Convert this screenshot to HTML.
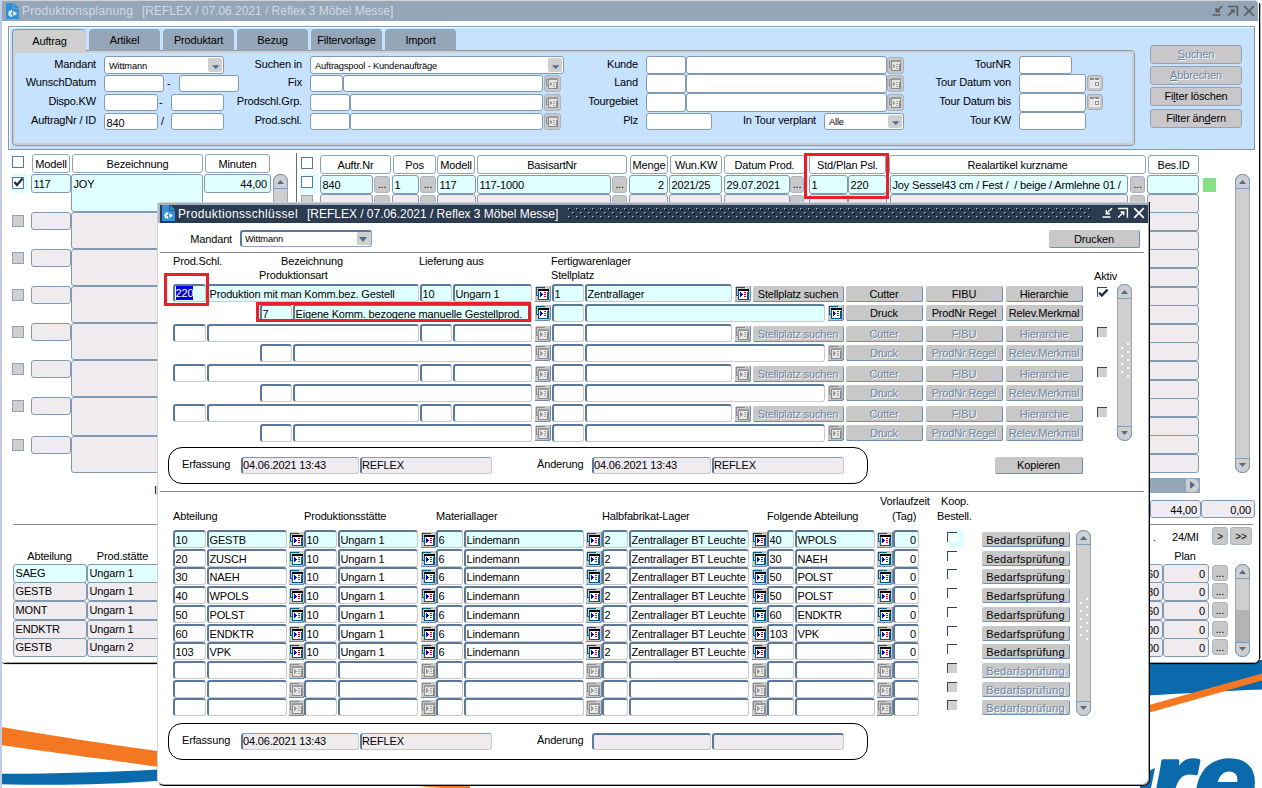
<!DOCTYPE html><html><head><meta charset="utf-8"><title>Produktionsplanung</title><style>
*{box-sizing:border-box;margin:0;padding:0}
html,body{width:1262px;height:788px;overflow:hidden;background:#fff}
body{position:relative;font-family:"Liberation Sans",sans-serif;font-size:11px;letter-spacing:-0.16px;color:#000;line-height:14px}
div,span,svg{position:absolute}
.t{white-space:nowrap;height:14px;line-height:14px}
.r{text-align:right}
.c{text-align:center}
/* main window field */
.mf{border:1px solid #8299b2;border-radius:3px;background:#fff;white-space:nowrap;overflow:hidden;padding-left:1.5px}
.mf.cy{background:#e0ffff}
.mf.dis{background:#efebef}
.mh{border:1px solid #8ea2b8;border-radius:3px;background:#fff;text-align:center;white-space:nowrap;overflow:hidden}
/* dialog field */
.df{border-style:solid;border-width:2px 1px 1px 2px;border-color:#5c7898 #c9c9c9 #c9c9c9 #5c7898;border-radius:3px;background:#fff;white-space:nowrap;overflow:hidden;padding-left:0.5px}
.df.cy{background:#e0ffff}
.df.dis{background:#efebef}
.bt{background:#c8c8c8;border-style:solid;border-width:0 1px 1px 0;border-color:#6f8db0;border-radius:2px;text-align:center;white-space:nowrap;overflow:hidden}
.bt.m{border:1px solid #97a3b2;border-radius:3px;background:#c9c7c9}
.bt.dis{color:#6c87a6;text-shadow:1px 1px 0 #fff}
.sb{background:#cfcfcf;border:1px solid #8ea6c0;border-radius:7px}
</style></head><body>
<svg style="left:0;top:660px" width="1262" height="128" viewBox="0 660 1262 128"><path d="M0 726.8 C50 735 110 745 158 751 L470 775 L470 790 L158 766.8 C110 760 50 752 0 745 Z" fill="#f47721"/><path d="M0 773.8 C60 773.5 110 772 158 769.4 L470 750 L470 775 L158 780.8 C110 784.5 60 785.5 0 784.2 Z" fill="#0b6aab"/><path d="M1140 660 L1262 660 L1262 689.6 C1225 691 1185 693.5 1140 696 Z" fill="#0b6aab"/><path d="M1140 707.6 L1262 673.6 L1262 680.4 L1140 715.2 Z" fill="#f47721"/><text x="1150" y="820" font-family="Liberation Sans" font-size="112" font-weight="bold" font-style="italic" fill="#0b6aab" stroke="#0b6aab" stroke-width="3.5" stroke-linejoin="round">r</text><text x="1194" y="820" font-family="Liberation Sans" font-size="112" font-weight="bold" font-style="italic" fill="#0b6aab" stroke="#0b6aab" stroke-width="3.5" stroke-linejoin="round">e</text><path d="M1140 775 L1155 768 L1151 788 L1140 788 Z" fill="#0b6aab"/></svg>
<div class="" style="left:0px;top:0px;width:2px;height:788px;background:#c3cce0"></div>
<div class="" style="left:2px;top:21px;width:1258px;height:643px;background:#fff;border-bottom:1px solid #000;border-right:1px solid #000;border-radius:0 0 6px 3px"></div>
<div class="" style="left:5px;top:662px;width:1250px;height:1px;background:rgba(0,0,0,.35)"></div>
<div class="" style="left:5px;top:664px;width:1250px;height:1px;background:rgba(0,0,0,.12)"></div>
<div class="" style="left:1260px;top:24px;width:1px;height:634px;background:rgba(0,0,0,.3)"></div>
<div class="" style="left:2px;top:0px;width:1254px;height:1px;background:#d4d4d4"></div>
<div class="" style="left:2px;top:1px;width:1256px;height:20px;background:#94a6b8;border-radius:0 3px 0 0"></div>
<div class="" style="left:1259px;top:3px;width:1px;height:30px;background:#000"></div>
<div class="" style="left:1260px;top:4px;width:1px;height:20px;background:rgba(0,0,0,.3)"></div>
<svg style="left:6px;top:3px" width="13.2" height="16" viewBox="0 0 13.2 16"><path d="M0 0 H7.3 V5.7 H13.2 V16 H0 Z" fill="#3192d9"/><path d="M8.1 0 L13.2 5 H8.1 Z" fill="#3192d9"/><path d="M5.9 8.1 A2.45 2.45 0 0 0 5.9 13 Z" fill="#fff"/><rect x="-0.75" y="-3.5" width="1.5" height="1.6" fill="#fff" transform="translate(5.5 10.55) rotate(0)"/><rect x="-0.75" y="-3.5" width="1.5" height="1.6" fill="#fff" transform="translate(5.5 10.55) rotate(-45)"/><rect x="-0.75" y="-3.5" width="1.5" height="1.6" fill="#fff" transform="translate(5.5 10.55) rotate(-90)"/><rect x="-0.75" y="-3.5" width="1.5" height="1.6" fill="#fff" transform="translate(5.5 10.55) rotate(-135)"/><rect x="-0.75" y="-3.5" width="1.5" height="1.6" fill="#fff" transform="translate(5.5 10.55) rotate(180)"/><circle cx="5.4" cy="10.55" r="0.8" fill="#3192d9"/><path d="M7.3 8.1 L11.1 10.55 L7.3 13 Z" fill="#fff"/></svg>
<div class="t" style="left:22px;top:4px;font-size:12px;color:#d3dae2;letter-spacing:0.29px;">Produktionsplanung</div>
<div class="t" style="left:142px;top:4px;font-size:12px;color:#d3dae2;letter-spacing:-0.02px;">[REFLEX / 07.06.2021 / Reflex 3 Möbel Messe]</div>
<svg style="left:1210px;top:3px" width="48" height="17" viewBox="0 0 48 17" fill="none" stroke="#5e5e5e" stroke-width="1.7"><path d="M2.5 12 H10.5 M12 3.2 L6.4 8.6 M6.3 5 V8.7 H10"/><path d="M18 3.5 H27.4 V12.8 M18.2 12.6 L23.6 7.1 M20.6 7 H23.7 V10.3"/><path d="M34.2 3.2 L43.8 12.8 M43.8 3.2 L34.2 12.8" stroke-width="1.7"/></svg>
<div class="" style="left:8px;top:26px;width:1247px;height:124px;background:#c6e2ff;border:1px solid #8497ab;box-shadow:inset 1px 1px 0 #fff"></div>
<div class="" style="left:12px;top:50px;width:1123px;height:96px;border:1px solid #8497ab;border-radius:4px;box-shadow:inset 0 0 0 2px #d0d0d0;"></div>
<div class="" style="left:12px;top:29px;width:74px;height:24px;background:#cfcfcf;border-left:1px solid #8497ab;border-top:1px solid #8497ab;border-radius:4px 4px 0 0;line-height:22px;text-align:center;">Auftrag</div>
<div class="" style="left:89px;top:29px;width:71px;height:22px;background:#94a6b8;border-radius:4px 4px 0 0;line-height:23px;text-align:center;">Artikel</div>
<div class="" style="left:163px;top:29px;width:71px;height:22px;background:#94a6b8;border-radius:4px 4px 0 0;line-height:23px;text-align:center;">Produktart</div>
<div class="" style="left:237px;top:29px;width:71px;height:22px;background:#94a6b8;border-radius:4px 4px 0 0;line-height:23px;text-align:center;">Bezug</div>
<div class="" style="left:311px;top:29px;width:71px;height:22px;background:#94a6b8;border-radius:4px 4px 0 0;line-height:23px;text-align:center;">Filtervorlage</div>
<div class="" style="left:385px;top:29px;width:71px;height:22px;background:#94a6b8;border-radius:4px 4px 0 0;line-height:23px;text-align:center;">Import</div>
<div class="t r" style="left:-204px;width:300px;top:57px;">Mandant</div>
<div class="t r" style="left:-204px;width:300px;top:75px;">WunschDatum</div>
<div class="t r" style="left:-204px;width:300px;top:94px;">Dispo.KW</div>
<div class="t r" style="left:-204px;width:300px;top:113px;">AuftragNr / ID</div>
<div class="mf " style="left:104px;top:56px;width:120px;height:18px;line-height:18px;padding-left:4px;font-size:9.3px;">Wittmann</div>
<div class="" style="left:208px;top:58px;width:14px;height:14px;background:#cfcfcf;border-radius:2px"></div>
<svg style="left:211.5px;top:65px" width="7.5" height="4" viewBox="0 0 8 4"><path d="M0 0 H8 L4 4 Z" fill="#4f6c92"/></svg>
<div class="mf " style="left:104px;top:75px;width:60px;height:17px;line-height:17px;"></div>
<div class="t" style="left:167px;top:76px;">-</div>
<div class="mf " style="left:179px;top:75px;width:60px;height:17px;line-height:17px;"></div>
<div class="mf " style="left:104px;top:94px;width:54px;height:17px;line-height:17px;"></div>
<div class="t" style="left:159px;top:95px;">-</div>
<div class="mf " style="left:171px;top:94px;width:53px;height:17px;line-height:17px;"></div>
<div class="mf " style="left:104px;top:113px;width:54px;height:17px;line-height:19px;">840</div>
<div class="t" style="left:161px;top:114px;">/</div>
<div class="mf " style="left:171px;top:113px;width:53px;height:17px;line-height:17px;"></div>
<div class="t r" style="left:2px;width:300px;top:57px;">Suchen in</div>
<div class="t r" style="left:2px;width:300px;top:75px;">Fix</div>
<div class="t r" style="left:2px;width:300px;top:94px;">Prodschl.Grp.</div>
<div class="t r" style="left:2px;width:300px;top:113px;">Prod.schl.</div>
<div class="mf " style="left:310px;top:56px;width:254px;height:18px;line-height:18px;padding-left:4px;font-size:9.3px;">Auftragspool - Kundenaufträge</div>
<div class="" style="left:548px;top:58px;width:14px;height:14px;background:#cfcfcf;border-radius:2px"></div>
<svg style="left:551.5px;top:65px" width="7.5" height="4" viewBox="0 0 8 4"><path d="M0 0 H8 L4 4 Z" fill="#4f6c92"/></svg>
<div class="mf " style="left:310px;top:75px;width:33px;height:17px;line-height:17px;"></div>
<div class="mf " style="left:343px;top:75px;width:200px;height:17px;line-height:17px;"></div>
<div class="" style="left:544px;top:75px;width:17px;height:17px;background:#c8c8c8;border:1px solid #a9b4c2;border-radius:3px"></div>
<svg style="left:545px;top:76px" width="15" height="15" viewBox="0 0 15 15" shape-rendering="crispEdges"><rect x="1.5" y="3.5" width="3" height="6" fill="none" stroke="#8c8c8c" stroke-width="1"/><rect x="3.5" y="3.5" width="9" height="9" fill="#e6e6e6" stroke="#8c8c8c" stroke-width="1"/><rect x="3" y="2" width="10" height="2" fill="#9a9a9a"/><rect x="12" y="2" width="1" height="4" fill="#9a9a9a"/><path d="M5 6 L7 8 L5 10 Z" fill="#9a9a9a"/><rect x="8" y="6" width="2" height="1" fill="#a8a8a8"/><rect x="8" y="8" width="2" height="1" fill="#a8a8a8"/><rect x="8" y="10" width="2" height="1" fill="#a8a8a8"/><rect x="11" y="6" width="1" height="6" fill="#8c8c8c"/></svg>
<div class="mf " style="left:310px;top:94px;width:40px;height:17px;line-height:17px;"></div>
<div class="mf " style="left:350px;top:94px;width:193px;height:17px;line-height:17px;"></div>
<div class="" style="left:544px;top:94px;width:17px;height:17px;background:#c8c8c8;border:1px solid #a9b4c2;border-radius:3px"></div>
<svg style="left:545px;top:95px" width="15" height="15" viewBox="0 0 15 15" shape-rendering="crispEdges"><rect x="1.5" y="3.5" width="3" height="6" fill="none" stroke="#8c8c8c" stroke-width="1"/><rect x="3.5" y="3.5" width="9" height="9" fill="#e6e6e6" stroke="#8c8c8c" stroke-width="1"/><rect x="3" y="2" width="10" height="2" fill="#9a9a9a"/><rect x="12" y="2" width="1" height="4" fill="#9a9a9a"/><path d="M5 6 L7 8 L5 10 Z" fill="#9a9a9a"/><rect x="8" y="6" width="2" height="1" fill="#a8a8a8"/><rect x="8" y="8" width="2" height="1" fill="#a8a8a8"/><rect x="8" y="10" width="2" height="1" fill="#a8a8a8"/><rect x="11" y="6" width="1" height="6" fill="#8c8c8c"/></svg>
<div class="mf " style="left:310px;top:113px;width:40px;height:17px;line-height:17px;"></div>
<div class="mf " style="left:350px;top:113px;width:193px;height:17px;line-height:17px;"></div>
<div class="" style="left:544px;top:113px;width:17px;height:17px;background:#c8c8c8;border:1px solid #a9b4c2;border-radius:3px"></div>
<svg style="left:545px;top:114px" width="15" height="15" viewBox="0 0 15 15" shape-rendering="crispEdges"><rect x="1.5" y="3.5" width="3" height="6" fill="none" stroke="#8c8c8c" stroke-width="1"/><rect x="3.5" y="3.5" width="9" height="9" fill="#e6e6e6" stroke="#8c8c8c" stroke-width="1"/><rect x="3" y="2" width="10" height="2" fill="#9a9a9a"/><rect x="12" y="2" width="1" height="4" fill="#9a9a9a"/><path d="M5 6 L7 8 L5 10 Z" fill="#9a9a9a"/><rect x="8" y="6" width="2" height="1" fill="#a8a8a8"/><rect x="8" y="8" width="2" height="1" fill="#a8a8a8"/><rect x="8" y="10" width="2" height="1" fill="#a8a8a8"/><rect x="11" y="6" width="1" height="6" fill="#8c8c8c"/></svg>
<div class="t r" style="left:338px;width:300px;top:57px;">Kunde</div>
<div class="t r" style="left:338px;width:300px;top:75px;">Land</div>
<div class="t r" style="left:338px;width:300px;top:94px;">Tourgebiet</div>
<div class="t r" style="left:338px;width:300px;top:113px;">Plz</div>
<div class="mf " style="left:646px;top:56px;width:40px;height:18px;line-height:18px;"></div>
<div class="mf " style="left:686px;top:56px;width:201px;height:18px;line-height:18px;"></div>
<div class="" style="left:887px;top:57px;width:17px;height:17px;background:#c8c8c8;border:1px solid #a9b4c2;border-radius:3px"></div>
<svg style="left:888px;top:58px" width="15" height="15" viewBox="0 0 15 15" shape-rendering="crispEdges"><rect x="1.5" y="3.5" width="3" height="6" fill="none" stroke="#8c8c8c" stroke-width="1"/><rect x="3.5" y="3.5" width="9" height="9" fill="#e6e6e6" stroke="#8c8c8c" stroke-width="1"/><rect x="3" y="2" width="10" height="2" fill="#9a9a9a"/><rect x="12" y="2" width="1" height="4" fill="#9a9a9a"/><path d="M5 6 L7 8 L5 10 Z" fill="#9a9a9a"/><rect x="8" y="6" width="2" height="1" fill="#a8a8a8"/><rect x="8" y="8" width="2" height="1" fill="#a8a8a8"/><rect x="8" y="10" width="2" height="1" fill="#a8a8a8"/><rect x="11" y="6" width="1" height="6" fill="#8c8c8c"/></svg>
<div class="mf " style="left:646px;top:74px;width:40px;height:19px;line-height:19px;"></div>
<div class="mf " style="left:686px;top:74px;width:201px;height:19px;line-height:19px;"></div>
<div class="" style="left:887px;top:75px;width:17px;height:17px;background:#c8c8c8;border:1px solid #a9b4c2;border-radius:3px"></div>
<svg style="left:888px;top:76px" width="15" height="15" viewBox="0 0 15 15" shape-rendering="crispEdges"><rect x="1.5" y="3.5" width="3" height="6" fill="none" stroke="#8c8c8c" stroke-width="1"/><rect x="3.5" y="3.5" width="9" height="9" fill="#e6e6e6" stroke="#8c8c8c" stroke-width="1"/><rect x="3" y="2" width="10" height="2" fill="#9a9a9a"/><rect x="12" y="2" width="1" height="4" fill="#9a9a9a"/><path d="M5 6 L7 8 L5 10 Z" fill="#9a9a9a"/><rect x="8" y="6" width="2" height="1" fill="#a8a8a8"/><rect x="8" y="8" width="2" height="1" fill="#a8a8a8"/><rect x="8" y="10" width="2" height="1" fill="#a8a8a8"/><rect x="11" y="6" width="1" height="6" fill="#8c8c8c"/></svg>
<div class="mf " style="left:646px;top:93px;width:40px;height:19px;line-height:19px;"></div>
<div class="mf " style="left:686px;top:93px;width:201px;height:19px;line-height:19px;"></div>
<div class="" style="left:887px;top:94px;width:17px;height:17px;background:#c8c8c8;border:1px solid #a9b4c2;border-radius:3px"></div>
<svg style="left:888px;top:95px" width="15" height="15" viewBox="0 0 15 15" shape-rendering="crispEdges"><rect x="1.5" y="3.5" width="3" height="6" fill="none" stroke="#8c8c8c" stroke-width="1"/><rect x="3.5" y="3.5" width="9" height="9" fill="#e6e6e6" stroke="#8c8c8c" stroke-width="1"/><rect x="3" y="2" width="10" height="2" fill="#9a9a9a"/><rect x="12" y="2" width="1" height="4" fill="#9a9a9a"/><path d="M5 6 L7 8 L5 10 Z" fill="#9a9a9a"/><rect x="8" y="6" width="2" height="1" fill="#a8a8a8"/><rect x="8" y="8" width="2" height="1" fill="#a8a8a8"/><rect x="8" y="10" width="2" height="1" fill="#a8a8a8"/><rect x="11" y="6" width="1" height="6" fill="#8c8c8c"/></svg>
<div class="mf " style="left:646px;top:113px;width:66px;height:17px;line-height:17px;"></div>
<div class="t r" style="left:516px;width:300px;top:113px;">In Tour verplant</div>
<div class="mf " style="left:824px;top:113px;width:80px;height:17px;line-height:17px;padding-left:4px;font-size:9.3px;">Alle</div>
<div class="" style="left:888px;top:115px;width:14px;height:13px;background:#cfcfcf;border-radius:2px"></div>
<svg style="left:891.5px;top:121px" width="7.5" height="4" viewBox="0 0 8 4"><path d="M0 0 H8 L4 4 Z" fill="#4f6c92"/></svg>
<div class="t r" style="left:711px;width:300px;top:57px;">TourNR</div>
<div class="t r" style="left:711px;width:300px;top:75px;">Tour Datum von</div>
<div class="t r" style="left:711px;width:300px;top:94px;">Tour Datum bis</div>
<div class="t r" style="left:711px;width:300px;top:113px;">Tour KW</div>
<div class="mf " style="left:1019px;top:56px;width:53px;height:18px;line-height:18px;"></div>
<div class="mf " style="left:1019px;top:74px;width:67px;height:19px;line-height:19px;"></div>
<div class="mf " style="left:1019px;top:93px;width:67px;height:19px;line-height:19px;"></div>
<div class="mf " style="left:1019px;top:112px;width:67px;height:18px;line-height:18px;"></div>
<div class="" style="left:1087px;top:75px;width:16px;height:16px;background:#c8c8c8;border:1px solid #a6aab2;border-radius:3px"></div>
<div class="" style="left:1090px;top:79px;width:10px;height:9px;background:#ececec"></div>
<div class="" style="left:1090px;top:78px;width:4px;height:2px;background:#8c8c8c"></div>
<div class="" style="left:1095px;top:78px;width:4px;height:2px;background:#8c8c8c"></div>
<div class="" style="left:1095px;top:82px;width:4px;height:4px;border:1px solid #8c8c8c;background:#f4f4f4"></div>
<div class="" style="left:1092px;top:81px;width:1px;height:6px;background:#d8d8d8"></div>
<div class="" style="left:1087px;top:94px;width:16px;height:16px;background:#c8c8c8;border:1px solid #a6aab2;border-radius:3px"></div>
<div class="" style="left:1090px;top:98px;width:10px;height:9px;background:#ececec"></div>
<div class="" style="left:1090px;top:97px;width:4px;height:2px;background:#8c8c8c"></div>
<div class="" style="left:1095px;top:97px;width:4px;height:2px;background:#8c8c8c"></div>
<div class="" style="left:1095px;top:101px;width:4px;height:4px;border:1px solid #8c8c8c;background:#f4f4f4"></div>
<div class="" style="left:1092px;top:100px;width:1px;height:6px;background:#d8d8d8"></div>
<div class="bt m dis" style="left:1150px;top:45px;width:92px;height:19px;line-height:17px;"><u>S</u>uchen</div>
<div class="bt m dis" style="left:1150px;top:66px;width:92px;height:19px;line-height:17px;"><u>A</u>bbrechen</div>
<div class="bt m" style="left:1150px;top:87px;width:92px;height:19px;line-height:17px;">Fi<u>l</u>ter löschen</div>
<div class="bt m" style="left:1150px;top:109px;width:92px;height:19px;line-height:17px;">Filter än<u>d</u>ern</div>
<div class="" style="left:12px;top:156px;width:12px;height:12px;background:#fff;border:1px solid #5c7898"></div>
<div class="mh" style="left:32px;top:154px;width:38px;height:19px;line-height:18px;">Modell</div>
<div class="mh" style="left:72px;top:154px;width:131px;height:19px;line-height:18px;">Bezeichnung</div>
<div class="mh" style="left:205px;top:154px;width:65px;height:19px;line-height:18px;">Minuten</div>
<div class="" style="left:12px;top:174px;width:16px;height:19px;background:#e0ffff"></div>
<div class="" style="left:12px;top:177px;width:12px;height:12px;background:#fff;border:1px solid #5c7898"></div>
<svg style="left:13px;top:177px" width="11" height="10" viewBox="0 0 11 10"><path d="M1.5 5 L4 8 L9.5 1.5" fill="none" stroke="#1c2b40" stroke-width="2.2"/></svg>
<div class="mf cy" style="left:31px;top:174px;width:40px;height:19px;line-height:19px;">117</div>
<div class="mf cy" style="left:71px;top:174px;width:132px;height:38px;line-height:18px;">JOY</div>
<div class="mf cy" style="left:204px;top:174px;width:67px;height:19px;line-height:19px;text-align:right;padding-right:3px;padding-left:0;">44,00</div>
<div class="" style="left:12px;top:215px;width:12px;height:12px;background:#d0d0d0;border:1px solid #8fa1b6"></div>
<div class="mf dis" style="left:31px;top:212px;width:40px;height:18px;line-height:18px;"></div>
<div class="mf dis" style="left:71px;top:212px;width:132px;height:37px;line-height:37px;"></div>
<div class="" style="left:12px;top:252px;width:12px;height:12px;background:#d0d0d0;border:1px solid #8fa1b6"></div>
<div class="mf dis" style="left:31px;top:249px;width:40px;height:18px;line-height:18px;"></div>
<div class="mf dis" style="left:71px;top:249px;width:132px;height:37px;line-height:37px;"></div>
<div class="" style="left:12px;top:289px;width:12px;height:12px;background:#d0d0d0;border:1px solid #8fa1b6"></div>
<div class="mf dis" style="left:31px;top:286px;width:40px;height:18px;line-height:18px;"></div>
<div class="mf dis" style="left:71px;top:286px;width:132px;height:37px;line-height:37px;"></div>
<div class="" style="left:12px;top:326px;width:12px;height:12px;background:#d0d0d0;border:1px solid #8fa1b6"></div>
<div class="mf dis" style="left:31px;top:323px;width:40px;height:18px;line-height:18px;"></div>
<div class="mf dis" style="left:71px;top:323px;width:132px;height:37px;line-height:37px;"></div>
<div class="" style="left:12px;top:363px;width:12px;height:12px;background:#d0d0d0;border:1px solid #8fa1b6"></div>
<div class="mf dis" style="left:31px;top:360px;width:40px;height:18px;line-height:18px;"></div>
<div class="mf dis" style="left:71px;top:360px;width:132px;height:37px;line-height:37px;"></div>
<div class="" style="left:12px;top:400px;width:12px;height:12px;background:#d0d0d0;border:1px solid #8fa1b6"></div>
<div class="mf dis" style="left:31px;top:397px;width:40px;height:18px;line-height:18px;"></div>
<div class="mf dis" style="left:71px;top:397px;width:132px;height:39px;line-height:39px;"></div>
<div class="" style="left:12px;top:439px;width:12px;height:12px;background:#d0d0d0;border:1px solid #8fa1b6"></div>
<div class="mf dis" style="left:31px;top:436px;width:40px;height:18px;line-height:18px;"></div>
<div class="mf dis" style="left:71px;top:436px;width:132px;height:37px;line-height:37px;"></div>
<div class="" style="left:273px;top:174px;width:15px;height:299px;background:#cfcfcf;border:1px solid #a2a6ac;border-radius:7px"></div>
<div class="" style="left:273px;top:174px;width:15px;height:15px;border:1px solid #7f9cba;border-radius:7px 7px 0 0;"></div>
<div class="" style="left:273px;top:458px;width:15px;height:15px;border:1px solid #7f9cba;border-radius:0 0 7px 7px;"></div>
<svg style="left:277px;top:180px" width="7" height="4" viewBox="0 0 8 4" preserveAspectRatio="none"><path d="M0 4 H8 L4 0 Z" fill="#4f6c92"/></svg>
<svg style="left:277px;top:463px" width="7" height="4" viewBox="0 0 8 4" preserveAspectRatio="none"><path d="M0 0 H8 L4 4 Z" fill="#4f6c92"/></svg>
<div class="" style="left:296px;top:153px;width:1px;height:330px;background:#6a6a6a"></div>
<div class="" style="left:300px;top:173px;width:18px;height:20px;background:#e0ffff"></div>
<div class="" style="left:301px;top:157px;width:12px;height:12px;background:#fff;border:1px solid #5c7898"></div>
<div class="mh" style="left:320px;top:155px;width:71px;height:19px;line-height:18px;">Auftr.Nr</div>
<div class="mh" style="left:393px;top:155px;width:43px;height:19px;line-height:18px;">Pos</div>
<div class="mh" style="left:437px;top:155px;width:38px;height:19px;line-height:18px;">Modell</div>
<div class="mh" style="left:477px;top:155px;width:150px;height:19px;line-height:18px;">BasisartNr</div>
<div class="mh" style="left:630px;top:155px;width:38px;height:19px;line-height:18px;">Menge</div>
<div class="mh" style="left:670px;top:155px;width:52px;height:19px;line-height:18px;">Wun.KW</div>
<div class="mh" style="left:724px;top:155px;width:81px;height:19px;line-height:18px;">Datum Prod.</div>
<div class="mh" style="left:809px;top:155px;width:77px;height:19px;line-height:18px;">Std/Plan Psl.</div>
<div class="mh" style="left:889px;top:155px;width:257px;height:19px;line-height:18px;">Realartikel kurzname</div>
<div class="mh" style="left:1148px;top:155px;width:51px;height:19px;line-height:18px;">Bes.ID</div>
<div class="" style="left:301px;top:176px;width:12px;height:12px;background:#fff;border:1px solid #5c7898"></div>
<div class="mf cy" style="left:320px;top:175px;width:53px;height:19px;line-height:19px;">840</div>
<div class="" style="left:374px;top:176px;width:16px;height:17px;background:#c8c8c8;border:1px solid #a9b4c2;border-radius:3px;text-align:center;line-height:14px;font-size:11px;">...</div>
<div class="mf cy" style="left:392px;top:175px;width:27px;height:19px;line-height:19px;">1</div>
<div class="" style="left:420px;top:176px;width:16px;height:17px;background:#c8c8c8;border:1px solid #a9b4c2;border-radius:3px;text-align:center;line-height:14px;font-size:11px;">...</div>
<div class="mf cy" style="left:437px;top:175px;width:39px;height:19px;line-height:19px;">117</div>
<div class="mf cy" style="left:477px;top:175px;width:134px;height:19px;line-height:19px;">117-1000</div>
<div class="" style="left:612px;top:176px;width:15px;height:17px;background:#c8c8c8;border:1px solid #a9b4c2;border-radius:3px;text-align:center;line-height:14px;font-size:11px;">...</div>
<div class="mf cy" style="left:629px;top:175px;width:39px;height:19px;line-height:19px;text-align:right;padding-right:3px;padding-left:0;">2</div>
<div class="mf cy" style="left:669px;top:175px;width:53px;height:19px;line-height:19px;">2021/25</div>
<div class="mf cy" style="left:724px;top:175px;width:66px;height:19px;line-height:19px;">29.07.2021</div>
<div class="" style="left:790px;top:176px;width:14px;height:17px;background:#c8c8c8;border:1px solid #a9b4c2;border-radius:3px;text-align:center;line-height:14px;font-size:11px;">...</div>
<div class="mf cy" style="left:809px;top:175px;width:39px;height:19px;line-height:19px;">1</div>
<div class="mf cy" style="left:848px;top:175px;width:39px;height:19px;line-height:19px;">220</div>
<div class="mf cy" style="left:890px;top:175px;width:238px;height:19px;line-height:19px;white-space:pre;">Joy Sessel43 cm / Fest /  / beige / Armlehne 01 /</div>
<div class="" style="left:1130px;top:176px;width:15px;height:17px;background:#c8c8c8;border:1px solid #a9b4c2;border-radius:3px;text-align:center;line-height:14px;font-size:11px;">...</div>
<div class="mf cy" style="left:1147px;top:175px;width:52px;height:19px;line-height:19px;"></div>
<div class="" style="left:301px;top:195px;width:12px;height:12px;background:#d0d0d0;border:1px solid #8fa1b6"></div>
<div class="mf dis" style="left:320px;top:194px;width:53px;height:19px;line-height:19px;"></div>
<div class="" style="left:374px;top:195px;width:16px;height:17px;background:#c8c8c8;border:1px solid #a9b4c2;border-radius:3px;text-align:center;line-height:14px;font-size:11px;color:#c8c8c8">...</div>
<div class="mf dis" style="left:392px;top:194px;width:27px;height:19px;line-height:19px;"></div>
<div class="" style="left:420px;top:195px;width:16px;height:17px;background:#c8c8c8;border:1px solid #a9b4c2;border-radius:3px;text-align:center;line-height:14px;font-size:11px;color:#c8c8c8">...</div>
<div class="mf dis" style="left:437px;top:194px;width:39px;height:19px;line-height:19px;"></div>
<div class="mf dis" style="left:477px;top:194px;width:134px;height:19px;line-height:19px;"></div>
<div class="" style="left:612px;top:195px;width:15px;height:17px;background:#c8c8c8;border:1px solid #a9b4c2;border-radius:3px;text-align:center;line-height:14px;font-size:11px;color:#c8c8c8">...</div>
<div class="mf dis" style="left:629px;top:194px;width:39px;height:19px;line-height:19px;text-align:right;padding-right:3px;padding-left:0;"></div>
<div class="mf dis" style="left:669px;top:194px;width:53px;height:19px;line-height:19px;"></div>
<div class="mf dis" style="left:724px;top:194px;width:66px;height:19px;line-height:19px;"></div>
<div class="" style="left:790px;top:195px;width:14px;height:17px;background:#c8c8c8;border:1px solid #a9b4c2;border-radius:3px;text-align:center;line-height:14px;font-size:11px;color:#c8c8c8">...</div>
<div class="mf dis" style="left:809px;top:194px;width:39px;height:19px;line-height:19px;"></div>
<div class="mf dis" style="left:848px;top:194px;width:39px;height:19px;line-height:19px;"></div>
<div class="mf dis" style="left:890px;top:194px;width:238px;height:19px;line-height:19px;white-space:pre;"></div>
<div class="" style="left:1130px;top:195px;width:15px;height:17px;background:#c8c8c8;border:1px solid #a9b4c2;border-radius:3px;text-align:center;line-height:14px;font-size:11px;color:#c8c8c8">...</div>
<div class="mf dis" style="left:1147px;top:194px;width:52px;height:19px;line-height:19px;"></div>
<div class="" style="left:301px;top:213px;width:12px;height:12px;background:#d0d0d0;border:1px solid #8fa1b6"></div>
<div class="mf dis" style="left:320px;top:212px;width:53px;height:19px;line-height:19px;"></div>
<div class="" style="left:374px;top:213px;width:16px;height:17px;background:#c8c8c8;border:1px solid #a9b4c2;border-radius:3px;text-align:center;line-height:14px;font-size:11px;color:#c8c8c8">...</div>
<div class="mf dis" style="left:392px;top:212px;width:27px;height:19px;line-height:19px;"></div>
<div class="" style="left:420px;top:213px;width:16px;height:17px;background:#c8c8c8;border:1px solid #a9b4c2;border-radius:3px;text-align:center;line-height:14px;font-size:11px;color:#c8c8c8">...</div>
<div class="mf dis" style="left:437px;top:212px;width:39px;height:19px;line-height:19px;"></div>
<div class="mf dis" style="left:477px;top:212px;width:134px;height:19px;line-height:19px;"></div>
<div class="" style="left:612px;top:213px;width:15px;height:17px;background:#c8c8c8;border:1px solid #a9b4c2;border-radius:3px;text-align:center;line-height:14px;font-size:11px;color:#c8c8c8">...</div>
<div class="mf dis" style="left:629px;top:212px;width:39px;height:19px;line-height:19px;text-align:right;padding-right:3px;padding-left:0;"></div>
<div class="mf dis" style="left:669px;top:212px;width:53px;height:19px;line-height:19px;"></div>
<div class="mf dis" style="left:724px;top:212px;width:66px;height:19px;line-height:19px;"></div>
<div class="" style="left:790px;top:213px;width:14px;height:17px;background:#c8c8c8;border:1px solid #a9b4c2;border-radius:3px;text-align:center;line-height:14px;font-size:11px;color:#c8c8c8">...</div>
<div class="mf dis" style="left:809px;top:212px;width:39px;height:19px;line-height:19px;"></div>
<div class="mf dis" style="left:848px;top:212px;width:39px;height:19px;line-height:19px;"></div>
<div class="mf dis" style="left:890px;top:212px;width:238px;height:19px;line-height:19px;white-space:pre;"></div>
<div class="" style="left:1130px;top:213px;width:15px;height:17px;background:#c8c8c8;border:1px solid #a9b4c2;border-radius:3px;text-align:center;line-height:14px;font-size:11px;color:#c8c8c8">...</div>
<div class="mf dis" style="left:1147px;top:212px;width:52px;height:19px;line-height:19px;"></div>
<div class="" style="left:301px;top:232px;width:12px;height:12px;background:#d0d0d0;border:1px solid #8fa1b6"></div>
<div class="mf dis" style="left:320px;top:231px;width:53px;height:19px;line-height:19px;"></div>
<div class="" style="left:374px;top:232px;width:16px;height:17px;background:#c8c8c8;border:1px solid #a9b4c2;border-radius:3px;text-align:center;line-height:14px;font-size:11px;color:#c8c8c8">...</div>
<div class="mf dis" style="left:392px;top:231px;width:27px;height:19px;line-height:19px;"></div>
<div class="" style="left:420px;top:232px;width:16px;height:17px;background:#c8c8c8;border:1px solid #a9b4c2;border-radius:3px;text-align:center;line-height:14px;font-size:11px;color:#c8c8c8">...</div>
<div class="mf dis" style="left:437px;top:231px;width:39px;height:19px;line-height:19px;"></div>
<div class="mf dis" style="left:477px;top:231px;width:134px;height:19px;line-height:19px;"></div>
<div class="" style="left:612px;top:232px;width:15px;height:17px;background:#c8c8c8;border:1px solid #a9b4c2;border-radius:3px;text-align:center;line-height:14px;font-size:11px;color:#c8c8c8">...</div>
<div class="mf dis" style="left:629px;top:231px;width:39px;height:19px;line-height:19px;text-align:right;padding-right:3px;padding-left:0;"></div>
<div class="mf dis" style="left:669px;top:231px;width:53px;height:19px;line-height:19px;"></div>
<div class="mf dis" style="left:724px;top:231px;width:66px;height:19px;line-height:19px;"></div>
<div class="" style="left:790px;top:232px;width:14px;height:17px;background:#c8c8c8;border:1px solid #a9b4c2;border-radius:3px;text-align:center;line-height:14px;font-size:11px;color:#c8c8c8">...</div>
<div class="mf dis" style="left:809px;top:231px;width:39px;height:19px;line-height:19px;"></div>
<div class="mf dis" style="left:848px;top:231px;width:39px;height:19px;line-height:19px;"></div>
<div class="mf dis" style="left:890px;top:231px;width:238px;height:19px;line-height:19px;white-space:pre;"></div>
<div class="" style="left:1130px;top:232px;width:15px;height:17px;background:#c8c8c8;border:1px solid #a9b4c2;border-radius:3px;text-align:center;line-height:14px;font-size:11px;color:#c8c8c8">...</div>
<div class="mf dis" style="left:1147px;top:231px;width:52px;height:19px;line-height:19px;"></div>
<div class="" style="left:301px;top:250px;width:12px;height:12px;background:#d0d0d0;border:1px solid #8fa1b6"></div>
<div class="mf dis" style="left:320px;top:249px;width:53px;height:19px;line-height:19px;"></div>
<div class="" style="left:374px;top:250px;width:16px;height:17px;background:#c8c8c8;border:1px solid #a9b4c2;border-radius:3px;text-align:center;line-height:14px;font-size:11px;color:#c8c8c8">...</div>
<div class="mf dis" style="left:392px;top:249px;width:27px;height:19px;line-height:19px;"></div>
<div class="" style="left:420px;top:250px;width:16px;height:17px;background:#c8c8c8;border:1px solid #a9b4c2;border-radius:3px;text-align:center;line-height:14px;font-size:11px;color:#c8c8c8">...</div>
<div class="mf dis" style="left:437px;top:249px;width:39px;height:19px;line-height:19px;"></div>
<div class="mf dis" style="left:477px;top:249px;width:134px;height:19px;line-height:19px;"></div>
<div class="" style="left:612px;top:250px;width:15px;height:17px;background:#c8c8c8;border:1px solid #a9b4c2;border-radius:3px;text-align:center;line-height:14px;font-size:11px;color:#c8c8c8">...</div>
<div class="mf dis" style="left:629px;top:249px;width:39px;height:19px;line-height:19px;text-align:right;padding-right:3px;padding-left:0;"></div>
<div class="mf dis" style="left:669px;top:249px;width:53px;height:19px;line-height:19px;"></div>
<div class="mf dis" style="left:724px;top:249px;width:66px;height:19px;line-height:19px;"></div>
<div class="" style="left:790px;top:250px;width:14px;height:17px;background:#c8c8c8;border:1px solid #a9b4c2;border-radius:3px;text-align:center;line-height:14px;font-size:11px;color:#c8c8c8">...</div>
<div class="mf dis" style="left:809px;top:249px;width:39px;height:19px;line-height:19px;"></div>
<div class="mf dis" style="left:848px;top:249px;width:39px;height:19px;line-height:19px;"></div>
<div class="mf dis" style="left:890px;top:249px;width:238px;height:19px;line-height:19px;white-space:pre;"></div>
<div class="" style="left:1130px;top:250px;width:15px;height:17px;background:#c8c8c8;border:1px solid #a9b4c2;border-radius:3px;text-align:center;line-height:14px;font-size:11px;color:#c8c8c8">...</div>
<div class="mf dis" style="left:1147px;top:249px;width:52px;height:19px;line-height:19px;"></div>
<div class="" style="left:301px;top:269px;width:12px;height:12px;background:#d0d0d0;border:1px solid #8fa1b6"></div>
<div class="mf dis" style="left:320px;top:268px;width:53px;height:19px;line-height:19px;"></div>
<div class="" style="left:374px;top:269px;width:16px;height:17px;background:#c8c8c8;border:1px solid #a9b4c2;border-radius:3px;text-align:center;line-height:14px;font-size:11px;color:#c8c8c8">...</div>
<div class="mf dis" style="left:392px;top:268px;width:27px;height:19px;line-height:19px;"></div>
<div class="" style="left:420px;top:269px;width:16px;height:17px;background:#c8c8c8;border:1px solid #a9b4c2;border-radius:3px;text-align:center;line-height:14px;font-size:11px;color:#c8c8c8">...</div>
<div class="mf dis" style="left:437px;top:268px;width:39px;height:19px;line-height:19px;"></div>
<div class="mf dis" style="left:477px;top:268px;width:134px;height:19px;line-height:19px;"></div>
<div class="" style="left:612px;top:269px;width:15px;height:17px;background:#c8c8c8;border:1px solid #a9b4c2;border-radius:3px;text-align:center;line-height:14px;font-size:11px;color:#c8c8c8">...</div>
<div class="mf dis" style="left:629px;top:268px;width:39px;height:19px;line-height:19px;text-align:right;padding-right:3px;padding-left:0;"></div>
<div class="mf dis" style="left:669px;top:268px;width:53px;height:19px;line-height:19px;"></div>
<div class="mf dis" style="left:724px;top:268px;width:66px;height:19px;line-height:19px;"></div>
<div class="" style="left:790px;top:269px;width:14px;height:17px;background:#c8c8c8;border:1px solid #a9b4c2;border-radius:3px;text-align:center;line-height:14px;font-size:11px;color:#c8c8c8">...</div>
<div class="mf dis" style="left:809px;top:268px;width:39px;height:19px;line-height:19px;"></div>
<div class="mf dis" style="left:848px;top:268px;width:39px;height:19px;line-height:19px;"></div>
<div class="mf dis" style="left:890px;top:268px;width:238px;height:19px;line-height:19px;white-space:pre;"></div>
<div class="" style="left:1130px;top:269px;width:15px;height:17px;background:#c8c8c8;border:1px solid #a9b4c2;border-radius:3px;text-align:center;line-height:14px;font-size:11px;color:#c8c8c8">...</div>
<div class="mf dis" style="left:1147px;top:268px;width:52px;height:19px;line-height:19px;"></div>
<div class="" style="left:301px;top:288px;width:12px;height:12px;background:#d0d0d0;border:1px solid #8fa1b6"></div>
<div class="mf dis" style="left:320px;top:287px;width:53px;height:19px;line-height:19px;"></div>
<div class="" style="left:374px;top:288px;width:16px;height:17px;background:#c8c8c8;border:1px solid #a9b4c2;border-radius:3px;text-align:center;line-height:14px;font-size:11px;color:#c8c8c8">...</div>
<div class="mf dis" style="left:392px;top:287px;width:27px;height:19px;line-height:19px;"></div>
<div class="" style="left:420px;top:288px;width:16px;height:17px;background:#c8c8c8;border:1px solid #a9b4c2;border-radius:3px;text-align:center;line-height:14px;font-size:11px;color:#c8c8c8">...</div>
<div class="mf dis" style="left:437px;top:287px;width:39px;height:19px;line-height:19px;"></div>
<div class="mf dis" style="left:477px;top:287px;width:134px;height:19px;line-height:19px;"></div>
<div class="" style="left:612px;top:288px;width:15px;height:17px;background:#c8c8c8;border:1px solid #a9b4c2;border-radius:3px;text-align:center;line-height:14px;font-size:11px;color:#c8c8c8">...</div>
<div class="mf dis" style="left:629px;top:287px;width:39px;height:19px;line-height:19px;text-align:right;padding-right:3px;padding-left:0;"></div>
<div class="mf dis" style="left:669px;top:287px;width:53px;height:19px;line-height:19px;"></div>
<div class="mf dis" style="left:724px;top:287px;width:66px;height:19px;line-height:19px;"></div>
<div class="" style="left:790px;top:288px;width:14px;height:17px;background:#c8c8c8;border:1px solid #a9b4c2;border-radius:3px;text-align:center;line-height:14px;font-size:11px;color:#c8c8c8">...</div>
<div class="mf dis" style="left:809px;top:287px;width:39px;height:19px;line-height:19px;"></div>
<div class="mf dis" style="left:848px;top:287px;width:39px;height:19px;line-height:19px;"></div>
<div class="mf dis" style="left:890px;top:287px;width:238px;height:19px;line-height:19px;white-space:pre;"></div>
<div class="" style="left:1130px;top:288px;width:15px;height:17px;background:#c8c8c8;border:1px solid #a9b4c2;border-radius:3px;text-align:center;line-height:14px;font-size:11px;color:#c8c8c8">...</div>
<div class="mf dis" style="left:1147px;top:287px;width:52px;height:19px;line-height:19px;"></div>
<div class="" style="left:301px;top:306px;width:12px;height:12px;background:#d0d0d0;border:1px solid #8fa1b6"></div>
<div class="mf dis" style="left:320px;top:305px;width:53px;height:19px;line-height:19px;"></div>
<div class="" style="left:374px;top:306px;width:16px;height:17px;background:#c8c8c8;border:1px solid #a9b4c2;border-radius:3px;text-align:center;line-height:14px;font-size:11px;color:#c8c8c8">...</div>
<div class="mf dis" style="left:392px;top:305px;width:27px;height:19px;line-height:19px;"></div>
<div class="" style="left:420px;top:306px;width:16px;height:17px;background:#c8c8c8;border:1px solid #a9b4c2;border-radius:3px;text-align:center;line-height:14px;font-size:11px;color:#c8c8c8">...</div>
<div class="mf dis" style="left:437px;top:305px;width:39px;height:19px;line-height:19px;"></div>
<div class="mf dis" style="left:477px;top:305px;width:134px;height:19px;line-height:19px;"></div>
<div class="" style="left:612px;top:306px;width:15px;height:17px;background:#c8c8c8;border:1px solid #a9b4c2;border-radius:3px;text-align:center;line-height:14px;font-size:11px;color:#c8c8c8">...</div>
<div class="mf dis" style="left:629px;top:305px;width:39px;height:19px;line-height:19px;text-align:right;padding-right:3px;padding-left:0;"></div>
<div class="mf dis" style="left:669px;top:305px;width:53px;height:19px;line-height:19px;"></div>
<div class="mf dis" style="left:724px;top:305px;width:66px;height:19px;line-height:19px;"></div>
<div class="" style="left:790px;top:306px;width:14px;height:17px;background:#c8c8c8;border:1px solid #a9b4c2;border-radius:3px;text-align:center;line-height:14px;font-size:11px;color:#c8c8c8">...</div>
<div class="mf dis" style="left:809px;top:305px;width:39px;height:19px;line-height:19px;"></div>
<div class="mf dis" style="left:848px;top:305px;width:39px;height:19px;line-height:19px;"></div>
<div class="mf dis" style="left:890px;top:305px;width:238px;height:19px;line-height:19px;white-space:pre;"></div>
<div class="" style="left:1130px;top:306px;width:15px;height:17px;background:#c8c8c8;border:1px solid #a9b4c2;border-radius:3px;text-align:center;line-height:14px;font-size:11px;color:#c8c8c8">...</div>
<div class="mf dis" style="left:1147px;top:305px;width:52px;height:19px;line-height:19px;"></div>
<div class="" style="left:301px;top:325px;width:12px;height:12px;background:#d0d0d0;border:1px solid #8fa1b6"></div>
<div class="mf dis" style="left:320px;top:324px;width:53px;height:19px;line-height:19px;"></div>
<div class="" style="left:374px;top:325px;width:16px;height:17px;background:#c8c8c8;border:1px solid #a9b4c2;border-radius:3px;text-align:center;line-height:14px;font-size:11px;color:#c8c8c8">...</div>
<div class="mf dis" style="left:392px;top:324px;width:27px;height:19px;line-height:19px;"></div>
<div class="" style="left:420px;top:325px;width:16px;height:17px;background:#c8c8c8;border:1px solid #a9b4c2;border-radius:3px;text-align:center;line-height:14px;font-size:11px;color:#c8c8c8">...</div>
<div class="mf dis" style="left:437px;top:324px;width:39px;height:19px;line-height:19px;"></div>
<div class="mf dis" style="left:477px;top:324px;width:134px;height:19px;line-height:19px;"></div>
<div class="" style="left:612px;top:325px;width:15px;height:17px;background:#c8c8c8;border:1px solid #a9b4c2;border-radius:3px;text-align:center;line-height:14px;font-size:11px;color:#c8c8c8">...</div>
<div class="mf dis" style="left:629px;top:324px;width:39px;height:19px;line-height:19px;text-align:right;padding-right:3px;padding-left:0;"></div>
<div class="mf dis" style="left:669px;top:324px;width:53px;height:19px;line-height:19px;"></div>
<div class="mf dis" style="left:724px;top:324px;width:66px;height:19px;line-height:19px;"></div>
<div class="" style="left:790px;top:325px;width:14px;height:17px;background:#c8c8c8;border:1px solid #a9b4c2;border-radius:3px;text-align:center;line-height:14px;font-size:11px;color:#c8c8c8">...</div>
<div class="mf dis" style="left:809px;top:324px;width:39px;height:19px;line-height:19px;"></div>
<div class="mf dis" style="left:848px;top:324px;width:39px;height:19px;line-height:19px;"></div>
<div class="mf dis" style="left:890px;top:324px;width:238px;height:19px;line-height:19px;white-space:pre;"></div>
<div class="" style="left:1130px;top:325px;width:15px;height:17px;background:#c8c8c8;border:1px solid #a9b4c2;border-radius:3px;text-align:center;line-height:14px;font-size:11px;color:#c8c8c8">...</div>
<div class="mf dis" style="left:1147px;top:324px;width:52px;height:19px;line-height:19px;"></div>
<div class="" style="left:301px;top:343px;width:12px;height:12px;background:#d0d0d0;border:1px solid #8fa1b6"></div>
<div class="mf dis" style="left:320px;top:342px;width:53px;height:19px;line-height:19px;"></div>
<div class="" style="left:374px;top:343px;width:16px;height:17px;background:#c8c8c8;border:1px solid #a9b4c2;border-radius:3px;text-align:center;line-height:14px;font-size:11px;color:#c8c8c8">...</div>
<div class="mf dis" style="left:392px;top:342px;width:27px;height:19px;line-height:19px;"></div>
<div class="" style="left:420px;top:343px;width:16px;height:17px;background:#c8c8c8;border:1px solid #a9b4c2;border-radius:3px;text-align:center;line-height:14px;font-size:11px;color:#c8c8c8">...</div>
<div class="mf dis" style="left:437px;top:342px;width:39px;height:19px;line-height:19px;"></div>
<div class="mf dis" style="left:477px;top:342px;width:134px;height:19px;line-height:19px;"></div>
<div class="" style="left:612px;top:343px;width:15px;height:17px;background:#c8c8c8;border:1px solid #a9b4c2;border-radius:3px;text-align:center;line-height:14px;font-size:11px;color:#c8c8c8">...</div>
<div class="mf dis" style="left:629px;top:342px;width:39px;height:19px;line-height:19px;text-align:right;padding-right:3px;padding-left:0;"></div>
<div class="mf dis" style="left:669px;top:342px;width:53px;height:19px;line-height:19px;"></div>
<div class="mf dis" style="left:724px;top:342px;width:66px;height:19px;line-height:19px;"></div>
<div class="" style="left:790px;top:343px;width:14px;height:17px;background:#c8c8c8;border:1px solid #a9b4c2;border-radius:3px;text-align:center;line-height:14px;font-size:11px;color:#c8c8c8">...</div>
<div class="mf dis" style="left:809px;top:342px;width:39px;height:19px;line-height:19px;"></div>
<div class="mf dis" style="left:848px;top:342px;width:39px;height:19px;line-height:19px;"></div>
<div class="mf dis" style="left:890px;top:342px;width:238px;height:19px;line-height:19px;white-space:pre;"></div>
<div class="" style="left:1130px;top:343px;width:15px;height:17px;background:#c8c8c8;border:1px solid #a9b4c2;border-radius:3px;text-align:center;line-height:14px;font-size:11px;color:#c8c8c8">...</div>
<div class="mf dis" style="left:1147px;top:342px;width:52px;height:19px;line-height:19px;"></div>
<div class="" style="left:301px;top:362px;width:12px;height:12px;background:#d0d0d0;border:1px solid #8fa1b6"></div>
<div class="mf dis" style="left:320px;top:361px;width:53px;height:19px;line-height:19px;"></div>
<div class="" style="left:374px;top:362px;width:16px;height:17px;background:#c8c8c8;border:1px solid #a9b4c2;border-radius:3px;text-align:center;line-height:14px;font-size:11px;color:#c8c8c8">...</div>
<div class="mf dis" style="left:392px;top:361px;width:27px;height:19px;line-height:19px;"></div>
<div class="" style="left:420px;top:362px;width:16px;height:17px;background:#c8c8c8;border:1px solid #a9b4c2;border-radius:3px;text-align:center;line-height:14px;font-size:11px;color:#c8c8c8">...</div>
<div class="mf dis" style="left:437px;top:361px;width:39px;height:19px;line-height:19px;"></div>
<div class="mf dis" style="left:477px;top:361px;width:134px;height:19px;line-height:19px;"></div>
<div class="" style="left:612px;top:362px;width:15px;height:17px;background:#c8c8c8;border:1px solid #a9b4c2;border-radius:3px;text-align:center;line-height:14px;font-size:11px;color:#c8c8c8">...</div>
<div class="mf dis" style="left:629px;top:361px;width:39px;height:19px;line-height:19px;text-align:right;padding-right:3px;padding-left:0;"></div>
<div class="mf dis" style="left:669px;top:361px;width:53px;height:19px;line-height:19px;"></div>
<div class="mf dis" style="left:724px;top:361px;width:66px;height:19px;line-height:19px;"></div>
<div class="" style="left:790px;top:362px;width:14px;height:17px;background:#c8c8c8;border:1px solid #a9b4c2;border-radius:3px;text-align:center;line-height:14px;font-size:11px;color:#c8c8c8">...</div>
<div class="mf dis" style="left:809px;top:361px;width:39px;height:19px;line-height:19px;"></div>
<div class="mf dis" style="left:848px;top:361px;width:39px;height:19px;line-height:19px;"></div>
<div class="mf dis" style="left:890px;top:361px;width:238px;height:19px;line-height:19px;white-space:pre;"></div>
<div class="" style="left:1130px;top:362px;width:15px;height:17px;background:#c8c8c8;border:1px solid #a9b4c2;border-radius:3px;text-align:center;line-height:14px;font-size:11px;color:#c8c8c8">...</div>
<div class="mf dis" style="left:1147px;top:361px;width:52px;height:19px;line-height:19px;"></div>
<div class="" style="left:301px;top:381px;width:12px;height:12px;background:#d0d0d0;border:1px solid #8fa1b6"></div>
<div class="mf dis" style="left:320px;top:380px;width:53px;height:19px;line-height:19px;"></div>
<div class="" style="left:374px;top:381px;width:16px;height:17px;background:#c8c8c8;border:1px solid #a9b4c2;border-radius:3px;text-align:center;line-height:14px;font-size:11px;color:#c8c8c8">...</div>
<div class="mf dis" style="left:392px;top:380px;width:27px;height:19px;line-height:19px;"></div>
<div class="" style="left:420px;top:381px;width:16px;height:17px;background:#c8c8c8;border:1px solid #a9b4c2;border-radius:3px;text-align:center;line-height:14px;font-size:11px;color:#c8c8c8">...</div>
<div class="mf dis" style="left:437px;top:380px;width:39px;height:19px;line-height:19px;"></div>
<div class="mf dis" style="left:477px;top:380px;width:134px;height:19px;line-height:19px;"></div>
<div class="" style="left:612px;top:381px;width:15px;height:17px;background:#c8c8c8;border:1px solid #a9b4c2;border-radius:3px;text-align:center;line-height:14px;font-size:11px;color:#c8c8c8">...</div>
<div class="mf dis" style="left:629px;top:380px;width:39px;height:19px;line-height:19px;text-align:right;padding-right:3px;padding-left:0;"></div>
<div class="mf dis" style="left:669px;top:380px;width:53px;height:19px;line-height:19px;"></div>
<div class="mf dis" style="left:724px;top:380px;width:66px;height:19px;line-height:19px;"></div>
<div class="" style="left:790px;top:381px;width:14px;height:17px;background:#c8c8c8;border:1px solid #a9b4c2;border-radius:3px;text-align:center;line-height:14px;font-size:11px;color:#c8c8c8">...</div>
<div class="mf dis" style="left:809px;top:380px;width:39px;height:19px;line-height:19px;"></div>
<div class="mf dis" style="left:848px;top:380px;width:39px;height:19px;line-height:19px;"></div>
<div class="mf dis" style="left:890px;top:380px;width:238px;height:19px;line-height:19px;white-space:pre;"></div>
<div class="" style="left:1130px;top:381px;width:15px;height:17px;background:#c8c8c8;border:1px solid #a9b4c2;border-radius:3px;text-align:center;line-height:14px;font-size:11px;color:#c8c8c8">...</div>
<div class="mf dis" style="left:1147px;top:380px;width:52px;height:19px;line-height:19px;"></div>
<div class="" style="left:301px;top:399px;width:12px;height:12px;background:#d0d0d0;border:1px solid #8fa1b6"></div>
<div class="mf dis" style="left:320px;top:398px;width:53px;height:19px;line-height:19px;"></div>
<div class="" style="left:374px;top:399px;width:16px;height:17px;background:#c8c8c8;border:1px solid #a9b4c2;border-radius:3px;text-align:center;line-height:14px;font-size:11px;color:#c8c8c8">...</div>
<div class="mf dis" style="left:392px;top:398px;width:27px;height:19px;line-height:19px;"></div>
<div class="" style="left:420px;top:399px;width:16px;height:17px;background:#c8c8c8;border:1px solid #a9b4c2;border-radius:3px;text-align:center;line-height:14px;font-size:11px;color:#c8c8c8">...</div>
<div class="mf dis" style="left:437px;top:398px;width:39px;height:19px;line-height:19px;"></div>
<div class="mf dis" style="left:477px;top:398px;width:134px;height:19px;line-height:19px;"></div>
<div class="" style="left:612px;top:399px;width:15px;height:17px;background:#c8c8c8;border:1px solid #a9b4c2;border-radius:3px;text-align:center;line-height:14px;font-size:11px;color:#c8c8c8">...</div>
<div class="mf dis" style="left:629px;top:398px;width:39px;height:19px;line-height:19px;text-align:right;padding-right:3px;padding-left:0;"></div>
<div class="mf dis" style="left:669px;top:398px;width:53px;height:19px;line-height:19px;"></div>
<div class="mf dis" style="left:724px;top:398px;width:66px;height:19px;line-height:19px;"></div>
<div class="" style="left:790px;top:399px;width:14px;height:17px;background:#c8c8c8;border:1px solid #a9b4c2;border-radius:3px;text-align:center;line-height:14px;font-size:11px;color:#c8c8c8">...</div>
<div class="mf dis" style="left:809px;top:398px;width:39px;height:19px;line-height:19px;"></div>
<div class="mf dis" style="left:848px;top:398px;width:39px;height:19px;line-height:19px;"></div>
<div class="mf dis" style="left:890px;top:398px;width:238px;height:19px;line-height:19px;white-space:pre;"></div>
<div class="" style="left:1130px;top:399px;width:15px;height:17px;background:#c8c8c8;border:1px solid #a9b4c2;border-radius:3px;text-align:center;line-height:14px;font-size:11px;color:#c8c8c8">...</div>
<div class="mf dis" style="left:1147px;top:398px;width:52px;height:19px;line-height:19px;"></div>
<div class="" style="left:301px;top:418px;width:12px;height:12px;background:#d0d0d0;border:1px solid #8fa1b6"></div>
<div class="mf dis" style="left:320px;top:417px;width:53px;height:19px;line-height:19px;"></div>
<div class="" style="left:374px;top:418px;width:16px;height:17px;background:#c8c8c8;border:1px solid #a9b4c2;border-radius:3px;text-align:center;line-height:14px;font-size:11px;color:#c8c8c8">...</div>
<div class="mf dis" style="left:392px;top:417px;width:27px;height:19px;line-height:19px;"></div>
<div class="" style="left:420px;top:418px;width:16px;height:17px;background:#c8c8c8;border:1px solid #a9b4c2;border-radius:3px;text-align:center;line-height:14px;font-size:11px;color:#c8c8c8">...</div>
<div class="mf dis" style="left:437px;top:417px;width:39px;height:19px;line-height:19px;"></div>
<div class="mf dis" style="left:477px;top:417px;width:134px;height:19px;line-height:19px;"></div>
<div class="" style="left:612px;top:418px;width:15px;height:17px;background:#c8c8c8;border:1px solid #a9b4c2;border-radius:3px;text-align:center;line-height:14px;font-size:11px;color:#c8c8c8">...</div>
<div class="mf dis" style="left:629px;top:417px;width:39px;height:19px;line-height:19px;text-align:right;padding-right:3px;padding-left:0;"></div>
<div class="mf dis" style="left:669px;top:417px;width:53px;height:19px;line-height:19px;"></div>
<div class="mf dis" style="left:724px;top:417px;width:66px;height:19px;line-height:19px;"></div>
<div class="" style="left:790px;top:418px;width:14px;height:17px;background:#c8c8c8;border:1px solid #a9b4c2;border-radius:3px;text-align:center;line-height:14px;font-size:11px;color:#c8c8c8">...</div>
<div class="mf dis" style="left:809px;top:417px;width:39px;height:19px;line-height:19px;"></div>
<div class="mf dis" style="left:848px;top:417px;width:39px;height:19px;line-height:19px;"></div>
<div class="mf dis" style="left:890px;top:417px;width:238px;height:19px;line-height:19px;white-space:pre;"></div>
<div class="" style="left:1130px;top:418px;width:15px;height:17px;background:#c8c8c8;border:1px solid #a9b4c2;border-radius:3px;text-align:center;line-height:14px;font-size:11px;color:#c8c8c8">...</div>
<div class="mf dis" style="left:1147px;top:417px;width:52px;height:19px;line-height:19px;"></div>
<div class="" style="left:301px;top:436px;width:12px;height:12px;background:#d0d0d0;border:1px solid #8fa1b6"></div>
<div class="mf dis" style="left:320px;top:435px;width:53px;height:19px;line-height:19px;"></div>
<div class="" style="left:374px;top:436px;width:16px;height:17px;background:#c8c8c8;border:1px solid #a9b4c2;border-radius:3px;text-align:center;line-height:14px;font-size:11px;color:#c8c8c8">...</div>
<div class="mf dis" style="left:392px;top:435px;width:27px;height:19px;line-height:19px;"></div>
<div class="" style="left:420px;top:436px;width:16px;height:17px;background:#c8c8c8;border:1px solid #a9b4c2;border-radius:3px;text-align:center;line-height:14px;font-size:11px;color:#c8c8c8">...</div>
<div class="mf dis" style="left:437px;top:435px;width:39px;height:19px;line-height:19px;"></div>
<div class="mf dis" style="left:477px;top:435px;width:134px;height:19px;line-height:19px;"></div>
<div class="" style="left:612px;top:436px;width:15px;height:17px;background:#c8c8c8;border:1px solid #a9b4c2;border-radius:3px;text-align:center;line-height:14px;font-size:11px;color:#c8c8c8">...</div>
<div class="mf dis" style="left:629px;top:435px;width:39px;height:19px;line-height:19px;text-align:right;padding-right:3px;padding-left:0;"></div>
<div class="mf dis" style="left:669px;top:435px;width:53px;height:19px;line-height:19px;"></div>
<div class="mf dis" style="left:724px;top:435px;width:66px;height:19px;line-height:19px;"></div>
<div class="" style="left:790px;top:436px;width:14px;height:17px;background:#c8c8c8;border:1px solid #a9b4c2;border-radius:3px;text-align:center;line-height:14px;font-size:11px;color:#c8c8c8">...</div>
<div class="mf dis" style="left:809px;top:435px;width:39px;height:19px;line-height:19px;"></div>
<div class="mf dis" style="left:848px;top:435px;width:39px;height:19px;line-height:19px;"></div>
<div class="mf dis" style="left:890px;top:435px;width:238px;height:19px;line-height:19px;white-space:pre;"></div>
<div class="" style="left:1130px;top:436px;width:15px;height:17px;background:#c8c8c8;border:1px solid #a9b4c2;border-radius:3px;text-align:center;line-height:14px;font-size:11px;color:#c8c8c8">...</div>
<div class="mf dis" style="left:1147px;top:435px;width:52px;height:19px;line-height:19px;"></div>
<div class="" style="left:301px;top:455px;width:12px;height:12px;background:#d0d0d0;border:1px solid #8fa1b6"></div>
<div class="mf dis" style="left:320px;top:454px;width:53px;height:19px;line-height:19px;"></div>
<div class="" style="left:374px;top:455px;width:16px;height:17px;background:#c8c8c8;border:1px solid #a9b4c2;border-radius:3px;text-align:center;line-height:14px;font-size:11px;color:#c8c8c8">...</div>
<div class="mf dis" style="left:392px;top:454px;width:27px;height:19px;line-height:19px;"></div>
<div class="" style="left:420px;top:455px;width:16px;height:17px;background:#c8c8c8;border:1px solid #a9b4c2;border-radius:3px;text-align:center;line-height:14px;font-size:11px;color:#c8c8c8">...</div>
<div class="mf dis" style="left:437px;top:454px;width:39px;height:19px;line-height:19px;"></div>
<div class="mf dis" style="left:477px;top:454px;width:134px;height:19px;line-height:19px;"></div>
<div class="" style="left:612px;top:455px;width:15px;height:17px;background:#c8c8c8;border:1px solid #a9b4c2;border-radius:3px;text-align:center;line-height:14px;font-size:11px;color:#c8c8c8">...</div>
<div class="mf dis" style="left:629px;top:454px;width:39px;height:19px;line-height:19px;text-align:right;padding-right:3px;padding-left:0;"></div>
<div class="mf dis" style="left:669px;top:454px;width:53px;height:19px;line-height:19px;"></div>
<div class="mf dis" style="left:724px;top:454px;width:66px;height:19px;line-height:19px;"></div>
<div class="" style="left:790px;top:455px;width:14px;height:17px;background:#c8c8c8;border:1px solid #a9b4c2;border-radius:3px;text-align:center;line-height:14px;font-size:11px;color:#c8c8c8">...</div>
<div class="mf dis" style="left:809px;top:454px;width:39px;height:19px;line-height:19px;"></div>
<div class="mf dis" style="left:848px;top:454px;width:39px;height:19px;line-height:19px;"></div>
<div class="mf dis" style="left:890px;top:454px;width:238px;height:19px;line-height:19px;white-space:pre;"></div>
<div class="" style="left:1130px;top:455px;width:15px;height:17px;background:#c8c8c8;border:1px solid #a9b4c2;border-radius:3px;text-align:center;line-height:14px;font-size:11px;color:#c8c8c8">...</div>
<div class="mf dis" style="left:1147px;top:454px;width:52px;height:19px;line-height:19px;"></div>
<div class="" style="left:1203px;top:178px;width:13px;height:14px;background:#84e184"></div>
<div class="" style="left:1235px;top:174px;width:15px;height:299px;background:#cfcfcf;border:1px solid #a2a6ac;border-radius:7px"></div>
<div class="" style="left:1235px;top:174px;width:15px;height:15px;border:1px solid #7f9cba;border-radius:7px 7px 0 0;"></div>
<div class="" style="left:1235px;top:458px;width:15px;height:15px;border:1px solid #7f9cba;border-radius:0 0 7px 7px;"></div>
<svg style="left:1239px;top:180px" width="7" height="4" viewBox="0 0 8 4" preserveAspectRatio="none"><path d="M0 4 H8 L4 0 Z" fill="#4f6c92"/></svg>
<svg style="left:1239px;top:463px" width="7" height="4" viewBox="0 0 8 4" preserveAspectRatio="none"><path d="M0 0 H8 L4 4 Z" fill="#4f6c92"/></svg>
<div class="" style="left:804px;top:153px;width:85px;height:46px;border:3px solid #e8202a;"></div>
<div class="" style="left:300px;top:478px;width:900px;height:15px;background:#94a6b8;border:1px solid #8ea6c0"></div>
<div class="" style="left:1186px;top:479px;width:13px;height:13px;background:#cfcfcf;border-radius:2px 6px 6px 2px"></div>
<svg style="left:1190px;top:481px" width="5" height="8" viewBox="0 0 5 8"><path d="M0 0 V8 L5 4 Z" fill="#4f6c92"/></svg>
<div class="mf dis" style="left:1150px;top:500px;width:51px;height:18px;line-height:18px;text-align:right;padding-right:3px;padding-left:0;">44,00</div>
<div class="mf dis" style="left:1201px;top:500px;width:54px;height:18px;line-height:18px;text-align:right;padding-right:3px;padding-left:0;">0,00</div>
<div class="t" style="left:154px;top:483px;">In</div>
<div class="" style="left:13px;top:524px;width:1240px;height:1px;background:#8a8a8a"></div>
<div class="t" style="left:1153px;top:530px;">.</div>
<div class="t" style="left:1172px;top:530px;">24/MI</div>
<div class="bt " style="left:1212px;top:527px;width:16px;height:18px;line-height:18px;border:1px solid #a9b4c2;font-size:10px;border-radius:3px;">&gt;</div>
<div class="bt " style="left:1230px;top:527px;width:22px;height:18px;line-height:18px;border:1px solid #a9b4c2;font-size:10px;border-radius:3px;">&gt;&gt;</div>
<div class="t c" style="left:13px;width:73px;top:549px;">Abteilung</div>
<div class="t c" style="left:87px;width:71px;top:549px;">Prod.stätte</div>
<div class="t c" style="left:1160px;width:50px;top:549px;">Plan</div>
<div class="mf cy" style="left:13px;top:564px;width:74px;height:19px;line-height:17px;">SAEG</div>
<div class="mf cy" style="left:87px;top:564px;width:80px;height:19px;line-height:17px;">Ungarn 1</div>
<div class="mf dis" style="left:1120px;top:564px;width:43px;height:19px;line-height:18px;text-align:right;padding-right:3px;padding-left:0;">60</div>
<div class="mf dis" style="left:1163px;top:564px;width:46px;height:19px;line-height:18px;text-align:right;padding-right:3px;padding-left:0;">0</div>
<div class="" style="left:1212px;top:565px;width:16px;height:16px;background:#c8c8c8;border:1px solid #a9b4c2;border-radius:3px;text-align:center;line-height:14px;font-size:11px;">...</div>
<div class="mf dis" style="left:13px;top:582px;width:74px;height:19px;line-height:17px;">GESTB</div>
<div class="mf dis" style="left:87px;top:582px;width:80px;height:19px;line-height:17px;">Ungarn 1</div>
<div class="mf dis" style="left:1120px;top:582px;width:43px;height:19px;line-height:18px;text-align:right;padding-right:3px;padding-left:0;">80</div>
<div class="mf dis" style="left:1163px;top:582px;width:46px;height:19px;line-height:18px;text-align:right;padding-right:3px;padding-left:0;">0</div>
<div class="" style="left:1212px;top:583px;width:16px;height:16px;background:#c8c8c8;border:1px solid #a9b4c2;border-radius:3px;text-align:center;line-height:14px;font-size:11px;">...</div>
<div class="mf dis" style="left:13px;top:601px;width:74px;height:19px;line-height:17px;">MONT</div>
<div class="mf dis" style="left:87px;top:601px;width:80px;height:19px;line-height:17px;">Ungarn 1</div>
<div class="mf dis" style="left:1120px;top:601px;width:43px;height:19px;line-height:18px;text-align:right;padding-right:3px;padding-left:0;">60</div>
<div class="mf dis" style="left:1163px;top:601px;width:46px;height:19px;line-height:18px;text-align:right;padding-right:3px;padding-left:0;">0</div>
<div class="" style="left:1212px;top:602px;width:16px;height:16px;background:#c8c8c8;border:1px solid #a9b4c2;border-radius:3px;text-align:center;line-height:14px;font-size:11px;">...</div>
<div class="mf dis" style="left:13px;top:620px;width:74px;height:19px;line-height:17px;">ENDKTR</div>
<div class="mf dis" style="left:87px;top:620px;width:80px;height:19px;line-height:17px;">Ungarn 1</div>
<div class="mf dis" style="left:1120px;top:620px;width:43px;height:19px;line-height:18px;text-align:right;padding-right:3px;padding-left:0;">00</div>
<div class="mf dis" style="left:1163px;top:620px;width:46px;height:19px;line-height:18px;text-align:right;padding-right:3px;padding-left:0;">0</div>
<div class="" style="left:1212px;top:621px;width:16px;height:16px;background:#c8c8c8;border:1px solid #a9b4c2;border-radius:3px;text-align:center;line-height:14px;font-size:11px;">...</div>
<div class="mf dis" style="left:13px;top:638px;width:74px;height:19px;line-height:17px;">GESTB</div>
<div class="mf dis" style="left:87px;top:638px;width:80px;height:19px;line-height:17px;">Ungarn 2</div>
<div class="mf dis" style="left:1120px;top:638px;width:43px;height:19px;line-height:18px;text-align:right;padding-right:3px;padding-left:0;">00</div>
<div class="mf dis" style="left:1163px;top:638px;width:46px;height:19px;line-height:18px;text-align:right;padding-right:3px;padding-left:0;">0</div>
<div class="" style="left:1212px;top:639px;width:16px;height:16px;background:#c8c8c8;border:1px solid #a9b4c2;border-radius:3px;text-align:center;line-height:14px;font-size:11px;">...</div>
<div class="" style="left:1235px;top:564px;width:15px;height:93px;background:#cfcfcf;border:1px solid #a2a6ac;border-radius:7px"></div>
<div class="" style="left:1235px;top:564px;width:15px;height:15px;border:1px solid #7f9cba;border-radius:7px 7px 0 0;"></div>
<div class="" style="left:1235px;top:642px;width:15px;height:15px;border:1px solid #7f9cba;border-radius:0 0 7px 7px;"></div>
<svg style="left:1239px;top:570px" width="7" height="4" viewBox="0 0 8 4" preserveAspectRatio="none"><path d="M0 4 H8 L4 0 Z" fill="#4f6c92"/></svg>
<svg style="left:1239px;top:647px" width="7" height="4" viewBox="0 0 8 4" preserveAspectRatio="none"><path d="M0 0 H8 L4 4 Z" fill="#4f6c92"/></svg>
<div class="" style="left:1236px;top:610px;width:13px;height:32px;background:#b4b4b4"></div>
<div class="" style="left:157px;top:202px;width:993px;height:584px;background:#fff;border-left:1px solid #d0d4da;border-right:1px solid #000;border-bottom:1px solid #000;border-radius:0 0 7px 7px;box-shadow:inset -1px -1px 0 rgba(0,0,0,.35)"></div>
<div class="" style="left:159px;top:202px;width:989px;height:1px;background:#d0d0d0"></div>
<div class="" style="left:158px;top:203px;width:990px;height:2px;background:#9fb0c4"></div>
<div class="" style="left:158px;top:204px;width:2px;height:19px;background:#a9b7c8"></div>
<div class="" style="left:160px;top:205px;width:988px;height:18px;background:#2b3b50"></div>
<svg style="left:162px;top:205px" width="13.2" height="16" viewBox="0 0 13.2 16"><path d="M0 0 H7.3 V5.7 H13.2 V16 H0 Z" fill="#3192d9"/><path d="M8.1 0 L13.2 5 H8.1 Z" fill="#3192d9"/><path d="M5.9 8.1 A2.45 2.45 0 0 0 5.9 13 Z" fill="#fff"/><rect x="-0.75" y="-3.5" width="1.5" height="1.6" fill="#fff" transform="translate(5.5 10.55) rotate(0)"/><rect x="-0.75" y="-3.5" width="1.5" height="1.6" fill="#fff" transform="translate(5.5 10.55) rotate(-45)"/><rect x="-0.75" y="-3.5" width="1.5" height="1.6" fill="#fff" transform="translate(5.5 10.55) rotate(-90)"/><rect x="-0.75" y="-3.5" width="1.5" height="1.6" fill="#fff" transform="translate(5.5 10.55) rotate(-135)"/><rect x="-0.75" y="-3.5" width="1.5" height="1.6" fill="#fff" transform="translate(5.5 10.55) rotate(180)"/><circle cx="5.4" cy="10.55" r="0.8" fill="#3192d9"/><path d="M7.3 8.1 L11.1 10.55 L7.3 13 Z" fill="#fff"/></svg>
<div class="t" style="left:178px;top:207px;font-size:12px;color:#fff;letter-spacing:0.36px;">Produktionsschlüssel</div>
<div class="t" style="left:307px;top:207px;font-size:12px;color:#fff;letter-spacing:-0.02px;">[REFLEX / 07.06.2021 / Reflex 3 Möbel Messe]</div>
<svg style="left:568px;top:208px" width="523" height="12"><defs><pattern id="dp" width="8" height="8" patternUnits="userSpaceOnUse"><rect x="0" y="0" width="1.6" height="1.6" fill="#9fb0c2"/><rect x="1" y="1" width="1.6" height="1.6" fill="#000"/><rect x="4" y="4" width="1.6" height="1.6" fill="#9fb0c2"/><rect x="5" y="5" width="1.6" height="1.6" fill="#000"/></pattern></defs><rect width="527" height="11" fill="url(#dp)"/></svg>
<svg style="left:1100px;top:205px" width="48" height="17" viewBox="0 0 48 17" fill="none" stroke="#fff" stroke-width="1.4"><path d="M2.5 12 H10.5 M12 3.2 L6.4 8.6 M6.3 5 V8.7 H10"/><path d="M18 3.5 H27.4 V12.8 M18.2 12.6 L23.6 7.1 M20.6 7 H23.7 V10.3"/><path d="M34.2 3.2 L43.8 12.8 M43.8 3.2 L34.2 12.8" stroke-width="1.7"/></svg>
<div class="t r" style="left:-68px;width:300px;top:232px;">Mandant</div>
<div class="mf " style="left:240px;top:230px;width:132px;height:17px;line-height:15px;padding-left:3px;border-width:2px 1px 1px 2px;border-color:#5c7898 #8ea6c0 #8ea6c0 #5c7898;font-size:9.3px;">Wittmann</div>
<div class="" style="left:357px;top:232px;width:14px;height:13px;background:#cfcfcf;border-radius:1px"></div>
<svg style="left:359px;top:237px" width="8" height="5" viewBox="0 0 8 5"><path d="M0 0 H8 L4 5 Z" fill="#4f6c92"/></svg>
<div class="bt " style="left:1049px;top:230px;width:91px;height:18px;line-height:18px;">Drucken</div>
<div class="" style="left:160px;top:252px;width:984px;height:1px;background:#8a8a8a"></div>
<div class="t" style="left:173px;top:254px;">Prod.Schl.</div>
<div class="t" style="left:281px;top:254px;">Bezeichnung</div>
<div class="t" style="left:259px;top:268px;">Produktionsart</div>
<div class="t" style="left:419px;top:254px;">Lieferung aus</div>
<div class="t" style="left:551px;top:254px;">Fertigwarenlager</div>
<div class="t" style="left:551px;top:268px;">Stellplatz</div>
<div class="t" style="left:1094px;top:269px;">Aktiv</div>
<div class="df cy" style="left:173px;top:284px;width:33px;height:18px;line-height:17px;"><span style="position:static;display:inline-block;height:14px;line-height:15px;margin-top:0px;vertical-align:top;background:#0000e0;color:#fff">220</span></div>
<div class="df cy" style="left:207px;top:284px;width:212px;height:18px;line-height:17px;">Produktion mit man Komm.bez. Gestell</div>
<div class="df cy" style="left:420px;top:284px;width:32px;height:18px;line-height:17px;">10</div>
<div class="df cy" style="left:453px;top:284px;width:79px;height:18px;line-height:17px;">Ungarn 1</div>
<svg style="left:535px;top:286px" width="16" height="16" viewBox="0 0 16 16" shape-rendering="crispEdges"><rect x="0" y="0" width="16" height="16" rx="2" fill="#6f8db0"/><rect x="0" y="0" width="15" height="15" rx="2" fill="#c8c8c8"/><path d="M1.5 10 V1.5 H9.5 M1.5 9.5 H4" fill="none" stroke="#005a82" stroke-width="1"/><rect x="3.5" y="3.5" width="10" height="10" fill="#fff" stroke="#005a82" stroke-width="1"/><rect x="3" y="3" width="11" height="2" fill="#000"/><path d="M5 6 L8 8.5 L5 11 Z" fill="#0000e0"/><rect x="8.5" y="6" width="2" height="1" fill="#e00000"/><rect x="8.5" y="8" width="2" height="1" fill="#e00000"/><rect x="8.5" y="10" width="2" height="1" fill="#e00000"/><rect x="11.5" y="5.5" width="1" height="7" fill="#005a82"/></svg>
<div class="df cy" style="left:552px;top:284px;width:32px;height:18px;line-height:17px;">1</div>
<div class="df cy" style="left:585px;top:284px;width:147px;height:18px;line-height:17px;">Zentrallager</div>
<svg style="left:735px;top:286px" width="16" height="16" viewBox="0 0 16 16" shape-rendering="crispEdges"><rect x="0" y="0" width="16" height="16" rx="2" fill="#6f8db0"/><rect x="0" y="0" width="15" height="15" rx="2" fill="#c8c8c8"/><path d="M1.5 10 V1.5 H9.5 M1.5 9.5 H4" fill="none" stroke="#005a82" stroke-width="1"/><rect x="3.5" y="3.5" width="10" height="10" fill="#fff" stroke="#005a82" stroke-width="1"/><rect x="3" y="3" width="11" height="2" fill="#000"/><path d="M5 6 L8 8.5 L5 11 Z" fill="#0000e0"/><rect x="8.5" y="6" width="2" height="1" fill="#e00000"/><rect x="8.5" y="8" width="2" height="1" fill="#e00000"/><rect x="8.5" y="10" width="2" height="1" fill="#e00000"/><rect x="11.5" y="5.5" width="1" height="7" fill="#005a82"/></svg>
<div class="bt " style="left:753px;top:286px;width:91px;height:16px;line-height:16px;">Stellplatz suchen</div>
<div class="bt " style="left:846px;top:286px;width:77px;height:16px;line-height:16px;">Cutter</div>
<div class="bt " style="left:926px;top:286px;width:77px;height:16px;line-height:16px;">FIBU</div>
<div class="bt " style="left:1006px;top:286px;width:77px;height:16px;line-height:16px;">Hierarchie</div>
<div class="" style="left:1097px;top:287px;width:10px;height:10px;background:#fff;border-top:1px solid #33465e;border-left:1px solid #33465e"></div>
<svg style="left:1098px;top:288px" width="11" height="10" viewBox="0 0 11 10"><path d="M1.2 4.8 L3.8 7.6 L9.6 1.6" fill="none" stroke="#1c2b40" stroke-width="2.3"/></svg>
<div class="df cy" style="left:260px;top:304px;width:32px;height:18px;line-height:17px;">7</div>
<div class="df cy" style="left:293px;top:304px;width:239px;height:18px;line-height:17px;">Eigene Komm. bezogene manuelle Gestellprod.</div>
<svg style="left:535px;top:305px" width="16" height="16" viewBox="0 0 16 16" shape-rendering="crispEdges"><rect x="0" y="0" width="16" height="16" rx="2" fill="#6f8db0"/><rect x="0" y="0" width="15" height="15" rx="2" fill="#c8c8c8"/><path d="M1.5 10 V1.5 H9.5 M1.5 9.5 H4" fill="none" stroke="#005a82" stroke-width="1"/><rect x="3.5" y="3.5" width="10" height="10" fill="#fff" stroke="#005a82" stroke-width="1"/><rect x="3" y="3" width="11" height="2" fill="#000"/><path d="M5 6 L8 8.5 L5 11 Z" fill="#0000e0"/><rect x="8.5" y="6" width="2" height="1" fill="#e00000"/><rect x="8.5" y="8" width="2" height="1" fill="#e00000"/><rect x="8.5" y="10" width="2" height="1" fill="#e00000"/><rect x="11.5" y="5.5" width="1" height="7" fill="#005a82"/></svg>
<div class="df cy" style="left:552px;top:304px;width:32px;height:18px;line-height:17px;"></div>
<div class="df cy" style="left:585px;top:304px;width:240px;height:18px;line-height:17px;"></div>
<svg style="left:828px;top:305px" width="16" height="16" viewBox="0 0 16 16" shape-rendering="crispEdges"><rect x="0" y="0" width="16" height="16" rx="2" fill="#6f8db0"/><rect x="0" y="0" width="15" height="15" rx="2" fill="#c8c8c8"/><path d="M1.5 10 V1.5 H9.5 M1.5 9.5 H4" fill="none" stroke="#005a82" stroke-width="1"/><rect x="3.5" y="3.5" width="10" height="10" fill="#fff" stroke="#005a82" stroke-width="1"/><rect x="3" y="3" width="11" height="2" fill="#000"/><path d="M5 6 L8 8.5 L5 11 Z" fill="#0000e0"/><rect x="8.5" y="6" width="2" height="1" fill="#e00000"/><rect x="8.5" y="8" width="2" height="1" fill="#e00000"/><rect x="8.5" y="10" width="2" height="1" fill="#e00000"/><rect x="11.5" y="5.5" width="1" height="7" fill="#005a82"/></svg>
<div class="bt " style="left:846px;top:305px;width:77px;height:16px;line-height:16px;">Druck</div>
<div class="bt " style="left:926px;top:305px;width:77px;height:16px;line-height:16px;">ProdNr Regel</div>
<div class="bt " style="left:1006px;top:305px;width:77px;height:16px;line-height:16px;">Relev.Merkmal</div>
<div class="df " style="left:173px;top:324px;width:33px;height:18px;line-height:17px;"></div>
<div class="df " style="left:207px;top:324px;width:212px;height:18px;line-height:17px;"></div>
<div class="df " style="left:420px;top:324px;width:32px;height:18px;line-height:17px;"></div>
<div class="df " style="left:453px;top:324px;width:79px;height:18px;line-height:17px;"></div>
<svg style="left:535px;top:326px" width="16" height="16" viewBox="0 0 16 16" shape-rendering="crispEdges"><rect x="0" y="0" width="16" height="16" rx="2" fill="#6f8db0"/><rect x="0" y="0" width="15" height="15" rx="2" fill="#c8c8c8"/><path d="M1.5 10 V1.5 H9.5 M1.5 9.5 H4" fill="none" stroke="#8c8c8c" stroke-width="1"/><rect x="3.5" y="3.5" width="10" height="10" fill="#e6e6e6" stroke="#8c8c8c" stroke-width="1"/><rect x="3" y="3" width="11" height="2" fill="#9a9a9a"/><path d="M5 6 L8 8.5 L5 11 Z" fill="#9a9a9a"/><rect x="8.5" y="6" width="2" height="1" fill="#a8a8a8"/><rect x="8.5" y="8" width="2" height="1" fill="#a8a8a8"/><rect x="8.5" y="10" width="2" height="1" fill="#a8a8a8"/><rect x="11.5" y="5.5" width="1" height="7" fill="#8c8c8c"/></svg>
<div class="df " style="left:552px;top:324px;width:32px;height:18px;line-height:17px;"></div>
<div class="df " style="left:585px;top:324px;width:147px;height:18px;line-height:17px;"></div>
<svg style="left:735px;top:326px" width="16" height="16" viewBox="0 0 16 16" shape-rendering="crispEdges"><rect x="0" y="0" width="16" height="16" rx="2" fill="#6f8db0"/><rect x="0" y="0" width="15" height="15" rx="2" fill="#c8c8c8"/><path d="M1.5 10 V1.5 H9.5 M1.5 9.5 H4" fill="none" stroke="#8c8c8c" stroke-width="1"/><rect x="3.5" y="3.5" width="10" height="10" fill="#e6e6e6" stroke="#8c8c8c" stroke-width="1"/><rect x="3" y="3" width="11" height="2" fill="#9a9a9a"/><path d="M5 6 L8 8.5 L5 11 Z" fill="#9a9a9a"/><rect x="8.5" y="6" width="2" height="1" fill="#a8a8a8"/><rect x="8.5" y="8" width="2" height="1" fill="#a8a8a8"/><rect x="8.5" y="10" width="2" height="1" fill="#a8a8a8"/><rect x="11.5" y="5.5" width="1" height="7" fill="#8c8c8c"/></svg>
<div class="bt  dis" style="left:753px;top:326px;width:91px;height:16px;line-height:16px;">Stellplatz suchen</div>
<div class="bt  dis" style="left:846px;top:326px;width:77px;height:16px;line-height:16px;">Cutter</div>
<div class="bt  dis" style="left:926px;top:326px;width:77px;height:16px;line-height:16px;">FIBU</div>
<div class="bt  dis" style="left:1006px;top:326px;width:77px;height:16px;line-height:16px;">Hierarchie</div>
<div class="" style="left:1097px;top:327px;width:10px;height:10px;background:#d0d0d0;border-top:1px solid #33465e;border-left:1px solid #33465e"></div>
<div class="df " style="left:260px;top:344px;width:32px;height:18px;line-height:17px;"></div>
<div class="df " style="left:293px;top:344px;width:239px;height:18px;line-height:17px;"></div>
<svg style="left:535px;top:345px" width="16" height="16" viewBox="0 0 16 16" shape-rendering="crispEdges"><rect x="0" y="0" width="16" height="16" rx="2" fill="#6f8db0"/><rect x="0" y="0" width="15" height="15" rx="2" fill="#c8c8c8"/><path d="M1.5 10 V1.5 H9.5 M1.5 9.5 H4" fill="none" stroke="#8c8c8c" stroke-width="1"/><rect x="3.5" y="3.5" width="10" height="10" fill="#e6e6e6" stroke="#8c8c8c" stroke-width="1"/><rect x="3" y="3" width="11" height="2" fill="#9a9a9a"/><path d="M5 6 L8 8.5 L5 11 Z" fill="#9a9a9a"/><rect x="8.5" y="6" width="2" height="1" fill="#a8a8a8"/><rect x="8.5" y="8" width="2" height="1" fill="#a8a8a8"/><rect x="8.5" y="10" width="2" height="1" fill="#a8a8a8"/><rect x="11.5" y="5.5" width="1" height="7" fill="#8c8c8c"/></svg>
<div class="df " style="left:552px;top:344px;width:32px;height:18px;line-height:17px;"></div>
<div class="df " style="left:585px;top:344px;width:240px;height:18px;line-height:17px;"></div>
<svg style="left:828px;top:345px" width="16" height="16" viewBox="0 0 16 16" shape-rendering="crispEdges"><rect x="0" y="0" width="16" height="16" rx="2" fill="#6f8db0"/><rect x="0" y="0" width="15" height="15" rx="2" fill="#c8c8c8"/><path d="M1.5 10 V1.5 H9.5 M1.5 9.5 H4" fill="none" stroke="#8c8c8c" stroke-width="1"/><rect x="3.5" y="3.5" width="10" height="10" fill="#e6e6e6" stroke="#8c8c8c" stroke-width="1"/><rect x="3" y="3" width="11" height="2" fill="#9a9a9a"/><path d="M5 6 L8 8.5 L5 11 Z" fill="#9a9a9a"/><rect x="8.5" y="6" width="2" height="1" fill="#a8a8a8"/><rect x="8.5" y="8" width="2" height="1" fill="#a8a8a8"/><rect x="8.5" y="10" width="2" height="1" fill="#a8a8a8"/><rect x="11.5" y="5.5" width="1" height="7" fill="#8c8c8c"/></svg>
<div class="bt  dis" style="left:846px;top:345px;width:77px;height:16px;line-height:16px;">Druck</div>
<div class="bt  dis" style="left:926px;top:345px;width:77px;height:16px;line-height:16px;">ProdNr Regel</div>
<div class="bt  dis" style="left:1006px;top:345px;width:77px;height:16px;line-height:16px;">Relev.Merkmal</div>
<div class="df " style="left:173px;top:364px;width:33px;height:18px;line-height:17px;"></div>
<div class="df " style="left:207px;top:364px;width:212px;height:18px;line-height:17px;"></div>
<div class="df " style="left:420px;top:364px;width:32px;height:18px;line-height:17px;"></div>
<div class="df " style="left:453px;top:364px;width:79px;height:18px;line-height:17px;"></div>
<svg style="left:535px;top:366px" width="16" height="16" viewBox="0 0 16 16" shape-rendering="crispEdges"><rect x="0" y="0" width="16" height="16" rx="2" fill="#6f8db0"/><rect x="0" y="0" width="15" height="15" rx="2" fill="#c8c8c8"/><path d="M1.5 10 V1.5 H9.5 M1.5 9.5 H4" fill="none" stroke="#8c8c8c" stroke-width="1"/><rect x="3.5" y="3.5" width="10" height="10" fill="#e6e6e6" stroke="#8c8c8c" stroke-width="1"/><rect x="3" y="3" width="11" height="2" fill="#9a9a9a"/><path d="M5 6 L8 8.5 L5 11 Z" fill="#9a9a9a"/><rect x="8.5" y="6" width="2" height="1" fill="#a8a8a8"/><rect x="8.5" y="8" width="2" height="1" fill="#a8a8a8"/><rect x="8.5" y="10" width="2" height="1" fill="#a8a8a8"/><rect x="11.5" y="5.5" width="1" height="7" fill="#8c8c8c"/></svg>
<div class="df " style="left:552px;top:364px;width:32px;height:18px;line-height:17px;"></div>
<div class="df " style="left:585px;top:364px;width:147px;height:18px;line-height:17px;"></div>
<svg style="left:735px;top:366px" width="16" height="16" viewBox="0 0 16 16" shape-rendering="crispEdges"><rect x="0" y="0" width="16" height="16" rx="2" fill="#6f8db0"/><rect x="0" y="0" width="15" height="15" rx="2" fill="#c8c8c8"/><path d="M1.5 10 V1.5 H9.5 M1.5 9.5 H4" fill="none" stroke="#8c8c8c" stroke-width="1"/><rect x="3.5" y="3.5" width="10" height="10" fill="#e6e6e6" stroke="#8c8c8c" stroke-width="1"/><rect x="3" y="3" width="11" height="2" fill="#9a9a9a"/><path d="M5 6 L8 8.5 L5 11 Z" fill="#9a9a9a"/><rect x="8.5" y="6" width="2" height="1" fill="#a8a8a8"/><rect x="8.5" y="8" width="2" height="1" fill="#a8a8a8"/><rect x="8.5" y="10" width="2" height="1" fill="#a8a8a8"/><rect x="11.5" y="5.5" width="1" height="7" fill="#8c8c8c"/></svg>
<div class="bt  dis" style="left:753px;top:366px;width:91px;height:16px;line-height:16px;">Stellplatz suchen</div>
<div class="bt  dis" style="left:846px;top:366px;width:77px;height:16px;line-height:16px;">Cutter</div>
<div class="bt  dis" style="left:926px;top:366px;width:77px;height:16px;line-height:16px;">FIBU</div>
<div class="bt  dis" style="left:1006px;top:366px;width:77px;height:16px;line-height:16px;">Hierarchie</div>
<div class="" style="left:1097px;top:367px;width:10px;height:10px;background:#d0d0d0;border-top:1px solid #33465e;border-left:1px solid #33465e"></div>
<div class="df " style="left:260px;top:384px;width:32px;height:18px;line-height:17px;"></div>
<div class="df " style="left:293px;top:384px;width:239px;height:18px;line-height:17px;"></div>
<svg style="left:535px;top:385px" width="16" height="16" viewBox="0 0 16 16" shape-rendering="crispEdges"><rect x="0" y="0" width="16" height="16" rx="2" fill="#6f8db0"/><rect x="0" y="0" width="15" height="15" rx="2" fill="#c8c8c8"/><path d="M1.5 10 V1.5 H9.5 M1.5 9.5 H4" fill="none" stroke="#8c8c8c" stroke-width="1"/><rect x="3.5" y="3.5" width="10" height="10" fill="#e6e6e6" stroke="#8c8c8c" stroke-width="1"/><rect x="3" y="3" width="11" height="2" fill="#9a9a9a"/><path d="M5 6 L8 8.5 L5 11 Z" fill="#9a9a9a"/><rect x="8.5" y="6" width="2" height="1" fill="#a8a8a8"/><rect x="8.5" y="8" width="2" height="1" fill="#a8a8a8"/><rect x="8.5" y="10" width="2" height="1" fill="#a8a8a8"/><rect x="11.5" y="5.5" width="1" height="7" fill="#8c8c8c"/></svg>
<div class="df " style="left:552px;top:384px;width:32px;height:18px;line-height:17px;"></div>
<div class="df " style="left:585px;top:384px;width:240px;height:18px;line-height:17px;"></div>
<svg style="left:828px;top:385px" width="16" height="16" viewBox="0 0 16 16" shape-rendering="crispEdges"><rect x="0" y="0" width="16" height="16" rx="2" fill="#6f8db0"/><rect x="0" y="0" width="15" height="15" rx="2" fill="#c8c8c8"/><path d="M1.5 10 V1.5 H9.5 M1.5 9.5 H4" fill="none" stroke="#8c8c8c" stroke-width="1"/><rect x="3.5" y="3.5" width="10" height="10" fill="#e6e6e6" stroke="#8c8c8c" stroke-width="1"/><rect x="3" y="3" width="11" height="2" fill="#9a9a9a"/><path d="M5 6 L8 8.5 L5 11 Z" fill="#9a9a9a"/><rect x="8.5" y="6" width="2" height="1" fill="#a8a8a8"/><rect x="8.5" y="8" width="2" height="1" fill="#a8a8a8"/><rect x="8.5" y="10" width="2" height="1" fill="#a8a8a8"/><rect x="11.5" y="5.5" width="1" height="7" fill="#8c8c8c"/></svg>
<div class="bt  dis" style="left:846px;top:385px;width:77px;height:16px;line-height:16px;">Druck</div>
<div class="bt  dis" style="left:926px;top:385px;width:77px;height:16px;line-height:16px;">ProdNr Regel</div>
<div class="bt  dis" style="left:1006px;top:385px;width:77px;height:16px;line-height:16px;">Relev.Merkmal</div>
<div class="df " style="left:173px;top:404px;width:33px;height:18px;line-height:17px;"></div>
<div class="df " style="left:207px;top:404px;width:212px;height:18px;line-height:17px;"></div>
<div class="df " style="left:420px;top:404px;width:32px;height:18px;line-height:17px;"></div>
<div class="df " style="left:453px;top:404px;width:79px;height:18px;line-height:17px;"></div>
<svg style="left:535px;top:406px" width="16" height="16" viewBox="0 0 16 16" shape-rendering="crispEdges"><rect x="0" y="0" width="16" height="16" rx="2" fill="#6f8db0"/><rect x="0" y="0" width="15" height="15" rx="2" fill="#c8c8c8"/><path d="M1.5 10 V1.5 H9.5 M1.5 9.5 H4" fill="none" stroke="#8c8c8c" stroke-width="1"/><rect x="3.5" y="3.5" width="10" height="10" fill="#e6e6e6" stroke="#8c8c8c" stroke-width="1"/><rect x="3" y="3" width="11" height="2" fill="#9a9a9a"/><path d="M5 6 L8 8.5 L5 11 Z" fill="#9a9a9a"/><rect x="8.5" y="6" width="2" height="1" fill="#a8a8a8"/><rect x="8.5" y="8" width="2" height="1" fill="#a8a8a8"/><rect x="8.5" y="10" width="2" height="1" fill="#a8a8a8"/><rect x="11.5" y="5.5" width="1" height="7" fill="#8c8c8c"/></svg>
<div class="df " style="left:552px;top:404px;width:32px;height:18px;line-height:17px;"></div>
<div class="df " style="left:585px;top:404px;width:147px;height:18px;line-height:17px;"></div>
<svg style="left:735px;top:406px" width="16" height="16" viewBox="0 0 16 16" shape-rendering="crispEdges"><rect x="0" y="0" width="16" height="16" rx="2" fill="#6f8db0"/><rect x="0" y="0" width="15" height="15" rx="2" fill="#c8c8c8"/><path d="M1.5 10 V1.5 H9.5 M1.5 9.5 H4" fill="none" stroke="#8c8c8c" stroke-width="1"/><rect x="3.5" y="3.5" width="10" height="10" fill="#e6e6e6" stroke="#8c8c8c" stroke-width="1"/><rect x="3" y="3" width="11" height="2" fill="#9a9a9a"/><path d="M5 6 L8 8.5 L5 11 Z" fill="#9a9a9a"/><rect x="8.5" y="6" width="2" height="1" fill="#a8a8a8"/><rect x="8.5" y="8" width="2" height="1" fill="#a8a8a8"/><rect x="8.5" y="10" width="2" height="1" fill="#a8a8a8"/><rect x="11.5" y="5.5" width="1" height="7" fill="#8c8c8c"/></svg>
<div class="bt  dis" style="left:753px;top:406px;width:91px;height:16px;line-height:16px;">Stellplatz suchen</div>
<div class="bt  dis" style="left:846px;top:406px;width:77px;height:16px;line-height:16px;">Cutter</div>
<div class="bt  dis" style="left:926px;top:406px;width:77px;height:16px;line-height:16px;">FIBU</div>
<div class="bt  dis" style="left:1006px;top:406px;width:77px;height:16px;line-height:16px;">Hierarchie</div>
<div class="" style="left:1097px;top:407px;width:10px;height:10px;background:#d0d0d0;border-top:1px solid #33465e;border-left:1px solid #33465e"></div>
<div class="df " style="left:260px;top:424px;width:32px;height:18px;line-height:17px;"></div>
<div class="df " style="left:293px;top:424px;width:239px;height:18px;line-height:17px;"></div>
<svg style="left:535px;top:425px" width="16" height="16" viewBox="0 0 16 16" shape-rendering="crispEdges"><rect x="0" y="0" width="16" height="16" rx="2" fill="#6f8db0"/><rect x="0" y="0" width="15" height="15" rx="2" fill="#c8c8c8"/><path d="M1.5 10 V1.5 H9.5 M1.5 9.5 H4" fill="none" stroke="#8c8c8c" stroke-width="1"/><rect x="3.5" y="3.5" width="10" height="10" fill="#e6e6e6" stroke="#8c8c8c" stroke-width="1"/><rect x="3" y="3" width="11" height="2" fill="#9a9a9a"/><path d="M5 6 L8 8.5 L5 11 Z" fill="#9a9a9a"/><rect x="8.5" y="6" width="2" height="1" fill="#a8a8a8"/><rect x="8.5" y="8" width="2" height="1" fill="#a8a8a8"/><rect x="8.5" y="10" width="2" height="1" fill="#a8a8a8"/><rect x="11.5" y="5.5" width="1" height="7" fill="#8c8c8c"/></svg>
<div class="df " style="left:552px;top:424px;width:32px;height:18px;line-height:17px;"></div>
<div class="df " style="left:585px;top:424px;width:240px;height:18px;line-height:17px;"></div>
<svg style="left:828px;top:425px" width="16" height="16" viewBox="0 0 16 16" shape-rendering="crispEdges"><rect x="0" y="0" width="16" height="16" rx="2" fill="#6f8db0"/><rect x="0" y="0" width="15" height="15" rx="2" fill="#c8c8c8"/><path d="M1.5 10 V1.5 H9.5 M1.5 9.5 H4" fill="none" stroke="#8c8c8c" stroke-width="1"/><rect x="3.5" y="3.5" width="10" height="10" fill="#e6e6e6" stroke="#8c8c8c" stroke-width="1"/><rect x="3" y="3" width="11" height="2" fill="#9a9a9a"/><path d="M5 6 L8 8.5 L5 11 Z" fill="#9a9a9a"/><rect x="8.5" y="6" width="2" height="1" fill="#a8a8a8"/><rect x="8.5" y="8" width="2" height="1" fill="#a8a8a8"/><rect x="8.5" y="10" width="2" height="1" fill="#a8a8a8"/><rect x="11.5" y="5.5" width="1" height="7" fill="#8c8c8c"/></svg>
<div class="bt  dis" style="left:846px;top:425px;width:77px;height:16px;line-height:16px;">Druck</div>
<div class="bt  dis" style="left:926px;top:425px;width:77px;height:16px;line-height:16px;">ProdNr Regel</div>
<div class="bt  dis" style="left:1006px;top:425px;width:77px;height:16px;line-height:16px;">Relev.Merkmal</div>
<div class="" style="left:1117px;top:284px;width:15px;height:157px;background:#cfcfcf;border:1px solid #a2a6ac;border-radius:7px"></div>
<div class="" style="left:1117px;top:284px;width:15px;height:15px;border:1px solid #7f9cba;border-radius:7px 7px 0 0;"></div>
<div class="" style="left:1117px;top:426px;width:15px;height:15px;border:1px solid #7f9cba;border-radius:0 0 7px 7px;"></div>
<svg style="left:1121px;top:290px" width="7" height="4" viewBox="0 0 8 4" preserveAspectRatio="none"><path d="M0 4 H8 L4 0 Z" fill="#4f6c92"/></svg>
<svg style="left:1121px;top:431px" width="7" height="4" viewBox="0 0 8 4" preserveAspectRatio="none"><path d="M0 0 H8 L4 4 Z" fill="#4f6c92"/></svg>
<div class="" style="left:1127px;top:343px;width:2px;height:2px;background:#fff"></div>
<div class="" style="left:1127px;top:351px;width:2px;height:2px;background:#fff"></div>
<div class="" style="left:1127px;top:359px;width:2px;height:2px;background:#fff"></div>
<div class="" style="left:1127px;top:367px;width:2px;height:2px;background:#fff"></div>
<div class="" style="left:1127px;top:375px;width:2px;height:2px;background:#fff"></div>
<div class="" style="left:1121px;top:347px;width:2px;height:2px;background:#fff"></div>
<div class="" style="left:1121px;top:355px;width:2px;height:2px;background:#fff"></div>
<div class="" style="left:1121px;top:363px;width:2px;height:2px;background:#fff"></div>
<div class="" style="left:1121px;top:371px;width:2px;height:2px;background:#fff"></div>
<div class="" style="left:164px;top:273px;width:45px;height:33px;border:3px solid #e8202a;"></div>
<div class="" style="left:256px;top:302px;width:275px;height:20px;border:3px solid #e8202a;"></div>
<div class="" style="left:168px;top:447px;width:700px;height:37px;border:1px solid #000;border-radius:14px;"></div>
<div class="t" style="left:182px;top:457px;">Erfassung</div>
<div class="df dis" style="left:241px;top:457px;width:118px;height:17px;line-height:16px;line-height:15px;padding-left:0;border-top-width:1px;border-top-color:#7f9cba;">04.06.2021 13:43</div>
<div class="df dis" style="left:360px;top:457px;width:132px;height:17px;line-height:16px;line-height:15px;padding-left:0;border-top-width:1px;border-top-color:#7f9cba;">REFLEX</div>
<div class="t" style="left:537px;top:457px;">Änderung</div>
<div class="df dis" style="left:592px;top:457px;width:119px;height:17px;line-height:16px;line-height:15px;padding-left:0;border-top-width:1px;border-top-color:#7f9cba;">04.06.2021 13:43</div>
<div class="df dis" style="left:712px;top:457px;width:132px;height:17px;line-height:16px;line-height:15px;padding-left:0;border-top-width:1px;border-top-color:#7f9cba;">REFLEX</div>
<div class="bt " style="left:995px;top:457px;width:88px;height:17px;line-height:17px;">Kopieren</div>
<div class="" style="left:160px;top:491px;width:984px;height:1px;background:#8a8a8a"></div>
<div class="t" style="left:173px;top:509px;">Abteilung</div>
<div class="t" style="left:304px;top:509px;">Produktionsstätte</div>
<div class="t" style="left:436px;top:509px;">Materiallager</div>
<div class="t" style="left:602px;top:509px;">Halbfabrikat-Lager</div>
<div class="t" style="left:767px;top:509px;">Folgende Abteilung</div>
<div class="t" style="left:880px;top:494px;">Vorlaufzeit</div>
<div class="t" style="left:892px;top:509px;">(Tag)</div>
<div class="t" style="left:941px;top:494px;">Koop.</div>
<div class="t" style="left:937px;top:509px;">Bestell.</div>
<div class="df cy" style="left:173px;top:530px;width:33px;height:18px;line-height:17px;">10</div>
<div class="df cy" style="left:207px;top:530px;width:80px;height:18px;line-height:17px;">GESTB</div>
<svg style="left:289px;top:532px" width="16" height="16" viewBox="0 0 16 16" shape-rendering="crispEdges"><rect x="0" y="0" width="16" height="16" rx="2" fill="#6f8db0"/><rect x="0" y="0" width="15" height="15" rx="2" fill="#c8c8c8"/><path d="M1.5 10 V1.5 H9.5 M1.5 9.5 H4" fill="none" stroke="#005a82" stroke-width="1"/><rect x="3.5" y="3.5" width="10" height="10" fill="#fff" stroke="#005a82" stroke-width="1"/><rect x="3" y="3" width="11" height="2" fill="#000"/><path d="M5 6 L8 8.5 L5 11 Z" fill="#0000e0"/><rect x="8.5" y="6" width="2" height="1" fill="#e00000"/><rect x="8.5" y="8" width="2" height="1" fill="#e00000"/><rect x="8.5" y="10" width="2" height="1" fill="#e00000"/><rect x="11.5" y="5.5" width="1" height="7" fill="#005a82"/></svg>
<div class="df cy" style="left:304px;top:530px;width:33px;height:18px;line-height:17px;">10</div>
<div class="df cy" style="left:338px;top:530px;width:80px;height:18px;line-height:17px;">Ungarn 1</div>
<svg style="left:421px;top:532px" width="16" height="16" viewBox="0 0 16 16" shape-rendering="crispEdges"><rect x="0" y="0" width="16" height="16" rx="2" fill="#6f8db0"/><rect x="0" y="0" width="15" height="15" rx="2" fill="#c8c8c8"/><path d="M1.5 10 V1.5 H9.5 M1.5 9.5 H4" fill="none" stroke="#005a82" stroke-width="1"/><rect x="3.5" y="3.5" width="10" height="10" fill="#fff" stroke="#005a82" stroke-width="1"/><rect x="3" y="3" width="11" height="2" fill="#000"/><path d="M5 6 L8 8.5 L5 11 Z" fill="#0000e0"/><rect x="8.5" y="6" width="2" height="1" fill="#e00000"/><rect x="8.5" y="8" width="2" height="1" fill="#e00000"/><rect x="8.5" y="10" width="2" height="1" fill="#e00000"/><rect x="11.5" y="5.5" width="1" height="7" fill="#005a82"/></svg>
<div class="df cy" style="left:436px;top:530px;width:27px;height:18px;line-height:17px;">6</div>
<div class="df cy" style="left:464px;top:530px;width:120px;height:18px;line-height:17px;">Lindemann</div>
<svg style="left:586px;top:532px" width="16" height="16" viewBox="0 0 16 16" shape-rendering="crispEdges"><rect x="0" y="0" width="16" height="16" rx="2" fill="#6f8db0"/><rect x="0" y="0" width="15" height="15" rx="2" fill="#c8c8c8"/><path d="M1.5 10 V1.5 H9.5 M1.5 9.5 H4" fill="none" stroke="#005a82" stroke-width="1"/><rect x="3.5" y="3.5" width="10" height="10" fill="#fff" stroke="#005a82" stroke-width="1"/><rect x="3" y="3" width="11" height="2" fill="#000"/><path d="M5 6 L8 8.5 L5 11 Z" fill="#0000e0"/><rect x="8.5" y="6" width="2" height="1" fill="#e00000"/><rect x="8.5" y="8" width="2" height="1" fill="#e00000"/><rect x="8.5" y="10" width="2" height="1" fill="#e00000"/><rect x="11.5" y="5.5" width="1" height="7" fill="#005a82"/></svg>
<div class="df cy" style="left:602px;top:530px;width:26px;height:18px;line-height:17px;">2</div>
<div class="df cy" style="left:629px;top:530px;width:120px;height:18px;line-height:17px;">Zentrallager BT Leuchte</div>
<svg style="left:752px;top:532px" width="16" height="16" viewBox="0 0 16 16" shape-rendering="crispEdges"><rect x="0" y="0" width="16" height="16" rx="2" fill="#6f8db0"/><rect x="0" y="0" width="15" height="15" rx="2" fill="#c8c8c8"/><path d="M1.5 10 V1.5 H9.5 M1.5 9.5 H4" fill="none" stroke="#005a82" stroke-width="1"/><rect x="3.5" y="3.5" width="10" height="10" fill="#fff" stroke="#005a82" stroke-width="1"/><rect x="3" y="3" width="11" height="2" fill="#000"/><path d="M5 6 L8 8.5 L5 11 Z" fill="#0000e0"/><rect x="8.5" y="6" width="2" height="1" fill="#e00000"/><rect x="8.5" y="8" width="2" height="1" fill="#e00000"/><rect x="8.5" y="10" width="2" height="1" fill="#e00000"/><rect x="11.5" y="5.5" width="1" height="7" fill="#005a82"/></svg>
<div class="df cy" style="left:767px;top:530px;width:27px;height:18px;line-height:17px;">40</div>
<div class="df cy" style="left:795px;top:530px;width:80px;height:18px;line-height:17px;">WPOLS</div>
<svg style="left:877px;top:532px" width="16" height="16" viewBox="0 0 16 16" shape-rendering="crispEdges"><rect x="0" y="0" width="16" height="16" rx="2" fill="#6f8db0"/><rect x="0" y="0" width="15" height="15" rx="2" fill="#c8c8c8"/><path d="M1.5 10 V1.5 H9.5 M1.5 9.5 H4" fill="none" stroke="#005a82" stroke-width="1"/><rect x="3.5" y="3.5" width="10" height="10" fill="#fff" stroke="#005a82" stroke-width="1"/><rect x="3" y="3" width="11" height="2" fill="#000"/><path d="M5 6 L8 8.5 L5 11 Z" fill="#0000e0"/><rect x="8.5" y="6" width="2" height="1" fill="#e00000"/><rect x="8.5" y="8" width="2" height="1" fill="#e00000"/><rect x="8.5" y="10" width="2" height="1" fill="#e00000"/><rect x="11.5" y="5.5" width="1" height="7" fill="#005a82"/></svg>
<div class="df cy" style="left:893px;top:530px;width:26px;height:18px;line-height:17px;text-align:right;padding-right:2px;padding-left:0;">0</div>
<div class="" style="left:947px;top:530px;width:17px;height:18px;background:#e0ffff"></div>
<div class="" style="left:947px;top:532px;width:10px;height:10px;background:#fff;border-top:1px solid #33465e;border-left:1px solid #33465e"></div>
<div class="bt " style="left:982px;top:532px;width:88px;height:15px;line-height:15px;line-height:16px;letter-spacing:0.25px;">Bedarfsprüfung</div>
<div class="df " style="left:173px;top:549px;width:33px;height:18px;line-height:17px;">20</div>
<div class="df " style="left:207px;top:549px;width:80px;height:18px;line-height:17px;">ZUSCH</div>
<svg style="left:289px;top:551px" width="16" height="16" viewBox="0 0 16 16" shape-rendering="crispEdges"><rect x="0" y="0" width="16" height="16" rx="2" fill="#6f8db0"/><rect x="0" y="0" width="15" height="15" rx="2" fill="#c8c8c8"/><path d="M1.5 10 V1.5 H9.5 M1.5 9.5 H4" fill="none" stroke="#005a82" stroke-width="1"/><rect x="3.5" y="3.5" width="10" height="10" fill="#fff" stroke="#005a82" stroke-width="1"/><rect x="3" y="3" width="11" height="2" fill="#000"/><path d="M5 6 L8 8.5 L5 11 Z" fill="#0000e0"/><rect x="8.5" y="6" width="2" height="1" fill="#e00000"/><rect x="8.5" y="8" width="2" height="1" fill="#e00000"/><rect x="8.5" y="10" width="2" height="1" fill="#e00000"/><rect x="11.5" y="5.5" width="1" height="7" fill="#005a82"/></svg>
<div class="df " style="left:304px;top:549px;width:33px;height:18px;line-height:17px;">10</div>
<div class="df " style="left:338px;top:549px;width:80px;height:18px;line-height:17px;">Ungarn 1</div>
<svg style="left:421px;top:551px" width="16" height="16" viewBox="0 0 16 16" shape-rendering="crispEdges"><rect x="0" y="0" width="16" height="16" rx="2" fill="#6f8db0"/><rect x="0" y="0" width="15" height="15" rx="2" fill="#c8c8c8"/><path d="M1.5 10 V1.5 H9.5 M1.5 9.5 H4" fill="none" stroke="#005a82" stroke-width="1"/><rect x="3.5" y="3.5" width="10" height="10" fill="#fff" stroke="#005a82" stroke-width="1"/><rect x="3" y="3" width="11" height="2" fill="#000"/><path d="M5 6 L8 8.5 L5 11 Z" fill="#0000e0"/><rect x="8.5" y="6" width="2" height="1" fill="#e00000"/><rect x="8.5" y="8" width="2" height="1" fill="#e00000"/><rect x="8.5" y="10" width="2" height="1" fill="#e00000"/><rect x="11.5" y="5.5" width="1" height="7" fill="#005a82"/></svg>
<div class="df " style="left:436px;top:549px;width:27px;height:18px;line-height:17px;">6</div>
<div class="df " style="left:464px;top:549px;width:120px;height:18px;line-height:17px;">Lindemann</div>
<svg style="left:586px;top:551px" width="16" height="16" viewBox="0 0 16 16" shape-rendering="crispEdges"><rect x="0" y="0" width="16" height="16" rx="2" fill="#6f8db0"/><rect x="0" y="0" width="15" height="15" rx="2" fill="#c8c8c8"/><path d="M1.5 10 V1.5 H9.5 M1.5 9.5 H4" fill="none" stroke="#005a82" stroke-width="1"/><rect x="3.5" y="3.5" width="10" height="10" fill="#fff" stroke="#005a82" stroke-width="1"/><rect x="3" y="3" width="11" height="2" fill="#000"/><path d="M5 6 L8 8.5 L5 11 Z" fill="#0000e0"/><rect x="8.5" y="6" width="2" height="1" fill="#e00000"/><rect x="8.5" y="8" width="2" height="1" fill="#e00000"/><rect x="8.5" y="10" width="2" height="1" fill="#e00000"/><rect x="11.5" y="5.5" width="1" height="7" fill="#005a82"/></svg>
<div class="df " style="left:602px;top:549px;width:26px;height:18px;line-height:17px;">2</div>
<div class="df " style="left:629px;top:549px;width:120px;height:18px;line-height:17px;">Zentrallager BT Leuchte</div>
<svg style="left:752px;top:551px" width="16" height="16" viewBox="0 0 16 16" shape-rendering="crispEdges"><rect x="0" y="0" width="16" height="16" rx="2" fill="#6f8db0"/><rect x="0" y="0" width="15" height="15" rx="2" fill="#c8c8c8"/><path d="M1.5 10 V1.5 H9.5 M1.5 9.5 H4" fill="none" stroke="#005a82" stroke-width="1"/><rect x="3.5" y="3.5" width="10" height="10" fill="#fff" stroke="#005a82" stroke-width="1"/><rect x="3" y="3" width="11" height="2" fill="#000"/><path d="M5 6 L8 8.5 L5 11 Z" fill="#0000e0"/><rect x="8.5" y="6" width="2" height="1" fill="#e00000"/><rect x="8.5" y="8" width="2" height="1" fill="#e00000"/><rect x="8.5" y="10" width="2" height="1" fill="#e00000"/><rect x="11.5" y="5.5" width="1" height="7" fill="#005a82"/></svg>
<div class="df " style="left:767px;top:549px;width:27px;height:18px;line-height:17px;">30</div>
<div class="df " style="left:795px;top:549px;width:80px;height:18px;line-height:17px;">NAEH</div>
<svg style="left:877px;top:551px" width="16" height="16" viewBox="0 0 16 16" shape-rendering="crispEdges"><rect x="0" y="0" width="16" height="16" rx="2" fill="#6f8db0"/><rect x="0" y="0" width="15" height="15" rx="2" fill="#c8c8c8"/><path d="M1.5 10 V1.5 H9.5 M1.5 9.5 H4" fill="none" stroke="#005a82" stroke-width="1"/><rect x="3.5" y="3.5" width="10" height="10" fill="#fff" stroke="#005a82" stroke-width="1"/><rect x="3" y="3" width="11" height="2" fill="#000"/><path d="M5 6 L8 8.5 L5 11 Z" fill="#0000e0"/><rect x="8.5" y="6" width="2" height="1" fill="#e00000"/><rect x="8.5" y="8" width="2" height="1" fill="#e00000"/><rect x="8.5" y="10" width="2" height="1" fill="#e00000"/><rect x="11.5" y="5.5" width="1" height="7" fill="#005a82"/></svg>
<div class="df " style="left:893px;top:549px;width:26px;height:18px;line-height:17px;text-align:right;padding-right:2px;padding-left:0;">0</div>
<div class="" style="left:947px;top:551px;width:10px;height:10px;background:#fff;border-top:1px solid #33465e;border-left:1px solid #33465e"></div>
<div class="bt " style="left:982px;top:551px;width:88px;height:15px;line-height:15px;line-height:16px;letter-spacing:0.25px;">Bedarfsprüfung</div>
<div class="df " style="left:173px;top:567px;width:33px;height:18px;line-height:17px;">30</div>
<div class="df " style="left:207px;top:567px;width:80px;height:18px;line-height:17px;">NAEH</div>
<svg style="left:289px;top:569px" width="16" height="16" viewBox="0 0 16 16" shape-rendering="crispEdges"><rect x="0" y="0" width="16" height="16" rx="2" fill="#6f8db0"/><rect x="0" y="0" width="15" height="15" rx="2" fill="#c8c8c8"/><path d="M1.5 10 V1.5 H9.5 M1.5 9.5 H4" fill="none" stroke="#005a82" stroke-width="1"/><rect x="3.5" y="3.5" width="10" height="10" fill="#fff" stroke="#005a82" stroke-width="1"/><rect x="3" y="3" width="11" height="2" fill="#000"/><path d="M5 6 L8 8.5 L5 11 Z" fill="#0000e0"/><rect x="8.5" y="6" width="2" height="1" fill="#e00000"/><rect x="8.5" y="8" width="2" height="1" fill="#e00000"/><rect x="8.5" y="10" width="2" height="1" fill="#e00000"/><rect x="11.5" y="5.5" width="1" height="7" fill="#005a82"/></svg>
<div class="df " style="left:304px;top:567px;width:33px;height:18px;line-height:17px;">10</div>
<div class="df " style="left:338px;top:567px;width:80px;height:18px;line-height:17px;">Ungarn 1</div>
<svg style="left:421px;top:569px" width="16" height="16" viewBox="0 0 16 16" shape-rendering="crispEdges"><rect x="0" y="0" width="16" height="16" rx="2" fill="#6f8db0"/><rect x="0" y="0" width="15" height="15" rx="2" fill="#c8c8c8"/><path d="M1.5 10 V1.5 H9.5 M1.5 9.5 H4" fill="none" stroke="#005a82" stroke-width="1"/><rect x="3.5" y="3.5" width="10" height="10" fill="#fff" stroke="#005a82" stroke-width="1"/><rect x="3" y="3" width="11" height="2" fill="#000"/><path d="M5 6 L8 8.5 L5 11 Z" fill="#0000e0"/><rect x="8.5" y="6" width="2" height="1" fill="#e00000"/><rect x="8.5" y="8" width="2" height="1" fill="#e00000"/><rect x="8.5" y="10" width="2" height="1" fill="#e00000"/><rect x="11.5" y="5.5" width="1" height="7" fill="#005a82"/></svg>
<div class="df " style="left:436px;top:567px;width:27px;height:18px;line-height:17px;">6</div>
<div class="df " style="left:464px;top:567px;width:120px;height:18px;line-height:17px;">Lindemann</div>
<svg style="left:586px;top:569px" width="16" height="16" viewBox="0 0 16 16" shape-rendering="crispEdges"><rect x="0" y="0" width="16" height="16" rx="2" fill="#6f8db0"/><rect x="0" y="0" width="15" height="15" rx="2" fill="#c8c8c8"/><path d="M1.5 10 V1.5 H9.5 M1.5 9.5 H4" fill="none" stroke="#005a82" stroke-width="1"/><rect x="3.5" y="3.5" width="10" height="10" fill="#fff" stroke="#005a82" stroke-width="1"/><rect x="3" y="3" width="11" height="2" fill="#000"/><path d="M5 6 L8 8.5 L5 11 Z" fill="#0000e0"/><rect x="8.5" y="6" width="2" height="1" fill="#e00000"/><rect x="8.5" y="8" width="2" height="1" fill="#e00000"/><rect x="8.5" y="10" width="2" height="1" fill="#e00000"/><rect x="11.5" y="5.5" width="1" height="7" fill="#005a82"/></svg>
<div class="df " style="left:602px;top:567px;width:26px;height:18px;line-height:17px;">2</div>
<div class="df " style="left:629px;top:567px;width:120px;height:18px;line-height:17px;">Zentrallager BT Leuchte</div>
<svg style="left:752px;top:569px" width="16" height="16" viewBox="0 0 16 16" shape-rendering="crispEdges"><rect x="0" y="0" width="16" height="16" rx="2" fill="#6f8db0"/><rect x="0" y="0" width="15" height="15" rx="2" fill="#c8c8c8"/><path d="M1.5 10 V1.5 H9.5 M1.5 9.5 H4" fill="none" stroke="#005a82" stroke-width="1"/><rect x="3.5" y="3.5" width="10" height="10" fill="#fff" stroke="#005a82" stroke-width="1"/><rect x="3" y="3" width="11" height="2" fill="#000"/><path d="M5 6 L8 8.5 L5 11 Z" fill="#0000e0"/><rect x="8.5" y="6" width="2" height="1" fill="#e00000"/><rect x="8.5" y="8" width="2" height="1" fill="#e00000"/><rect x="8.5" y="10" width="2" height="1" fill="#e00000"/><rect x="11.5" y="5.5" width="1" height="7" fill="#005a82"/></svg>
<div class="df " style="left:767px;top:567px;width:27px;height:18px;line-height:17px;">50</div>
<div class="df " style="left:795px;top:567px;width:80px;height:18px;line-height:17px;">POLST</div>
<svg style="left:877px;top:569px" width="16" height="16" viewBox="0 0 16 16" shape-rendering="crispEdges"><rect x="0" y="0" width="16" height="16" rx="2" fill="#6f8db0"/><rect x="0" y="0" width="15" height="15" rx="2" fill="#c8c8c8"/><path d="M1.5 10 V1.5 H9.5 M1.5 9.5 H4" fill="none" stroke="#005a82" stroke-width="1"/><rect x="3.5" y="3.5" width="10" height="10" fill="#fff" stroke="#005a82" stroke-width="1"/><rect x="3" y="3" width="11" height="2" fill="#000"/><path d="M5 6 L8 8.5 L5 11 Z" fill="#0000e0"/><rect x="8.5" y="6" width="2" height="1" fill="#e00000"/><rect x="8.5" y="8" width="2" height="1" fill="#e00000"/><rect x="8.5" y="10" width="2" height="1" fill="#e00000"/><rect x="11.5" y="5.5" width="1" height="7" fill="#005a82"/></svg>
<div class="df " style="left:893px;top:567px;width:26px;height:18px;line-height:17px;text-align:right;padding-right:2px;padding-left:0;">0</div>
<div class="" style="left:947px;top:569px;width:10px;height:10px;background:#fff;border-top:1px solid #33465e;border-left:1px solid #33465e"></div>
<div class="bt " style="left:982px;top:569px;width:88px;height:15px;line-height:15px;line-height:16px;letter-spacing:0.25px;">Bedarfsprüfung</div>
<div class="df " style="left:173px;top:586px;width:33px;height:18px;line-height:17px;">40</div>
<div class="df " style="left:207px;top:586px;width:80px;height:18px;line-height:17px;">WPOLS</div>
<svg style="left:289px;top:588px" width="16" height="16" viewBox="0 0 16 16" shape-rendering="crispEdges"><rect x="0" y="0" width="16" height="16" rx="2" fill="#6f8db0"/><rect x="0" y="0" width="15" height="15" rx="2" fill="#c8c8c8"/><path d="M1.5 10 V1.5 H9.5 M1.5 9.5 H4" fill="none" stroke="#005a82" stroke-width="1"/><rect x="3.5" y="3.5" width="10" height="10" fill="#fff" stroke="#005a82" stroke-width="1"/><rect x="3" y="3" width="11" height="2" fill="#000"/><path d="M5 6 L8 8.5 L5 11 Z" fill="#0000e0"/><rect x="8.5" y="6" width="2" height="1" fill="#e00000"/><rect x="8.5" y="8" width="2" height="1" fill="#e00000"/><rect x="8.5" y="10" width="2" height="1" fill="#e00000"/><rect x="11.5" y="5.5" width="1" height="7" fill="#005a82"/></svg>
<div class="df " style="left:304px;top:586px;width:33px;height:18px;line-height:17px;">10</div>
<div class="df " style="left:338px;top:586px;width:80px;height:18px;line-height:17px;">Ungarn 1</div>
<svg style="left:421px;top:588px" width="16" height="16" viewBox="0 0 16 16" shape-rendering="crispEdges"><rect x="0" y="0" width="16" height="16" rx="2" fill="#6f8db0"/><rect x="0" y="0" width="15" height="15" rx="2" fill="#c8c8c8"/><path d="M1.5 10 V1.5 H9.5 M1.5 9.5 H4" fill="none" stroke="#005a82" stroke-width="1"/><rect x="3.5" y="3.5" width="10" height="10" fill="#fff" stroke="#005a82" stroke-width="1"/><rect x="3" y="3" width="11" height="2" fill="#000"/><path d="M5 6 L8 8.5 L5 11 Z" fill="#0000e0"/><rect x="8.5" y="6" width="2" height="1" fill="#e00000"/><rect x="8.5" y="8" width="2" height="1" fill="#e00000"/><rect x="8.5" y="10" width="2" height="1" fill="#e00000"/><rect x="11.5" y="5.5" width="1" height="7" fill="#005a82"/></svg>
<div class="df " style="left:436px;top:586px;width:27px;height:18px;line-height:17px;">6</div>
<div class="df " style="left:464px;top:586px;width:120px;height:18px;line-height:17px;">Lindemann</div>
<svg style="left:586px;top:588px" width="16" height="16" viewBox="0 0 16 16" shape-rendering="crispEdges"><rect x="0" y="0" width="16" height="16" rx="2" fill="#6f8db0"/><rect x="0" y="0" width="15" height="15" rx="2" fill="#c8c8c8"/><path d="M1.5 10 V1.5 H9.5 M1.5 9.5 H4" fill="none" stroke="#005a82" stroke-width="1"/><rect x="3.5" y="3.5" width="10" height="10" fill="#fff" stroke="#005a82" stroke-width="1"/><rect x="3" y="3" width="11" height="2" fill="#000"/><path d="M5 6 L8 8.5 L5 11 Z" fill="#0000e0"/><rect x="8.5" y="6" width="2" height="1" fill="#e00000"/><rect x="8.5" y="8" width="2" height="1" fill="#e00000"/><rect x="8.5" y="10" width="2" height="1" fill="#e00000"/><rect x="11.5" y="5.5" width="1" height="7" fill="#005a82"/></svg>
<div class="df " style="left:602px;top:586px;width:26px;height:18px;line-height:17px;">2</div>
<div class="df " style="left:629px;top:586px;width:120px;height:18px;line-height:17px;">Zentrallager BT Leuchte</div>
<svg style="left:752px;top:588px" width="16" height="16" viewBox="0 0 16 16" shape-rendering="crispEdges"><rect x="0" y="0" width="16" height="16" rx="2" fill="#6f8db0"/><rect x="0" y="0" width="15" height="15" rx="2" fill="#c8c8c8"/><path d="M1.5 10 V1.5 H9.5 M1.5 9.5 H4" fill="none" stroke="#005a82" stroke-width="1"/><rect x="3.5" y="3.5" width="10" height="10" fill="#fff" stroke="#005a82" stroke-width="1"/><rect x="3" y="3" width="11" height="2" fill="#000"/><path d="M5 6 L8 8.5 L5 11 Z" fill="#0000e0"/><rect x="8.5" y="6" width="2" height="1" fill="#e00000"/><rect x="8.5" y="8" width="2" height="1" fill="#e00000"/><rect x="8.5" y="10" width="2" height="1" fill="#e00000"/><rect x="11.5" y="5.5" width="1" height="7" fill="#005a82"/></svg>
<div class="df " style="left:767px;top:586px;width:27px;height:18px;line-height:17px;">50</div>
<div class="df " style="left:795px;top:586px;width:80px;height:18px;line-height:17px;">POLST</div>
<svg style="left:877px;top:588px" width="16" height="16" viewBox="0 0 16 16" shape-rendering="crispEdges"><rect x="0" y="0" width="16" height="16" rx="2" fill="#6f8db0"/><rect x="0" y="0" width="15" height="15" rx="2" fill="#c8c8c8"/><path d="M1.5 10 V1.5 H9.5 M1.5 9.5 H4" fill="none" stroke="#005a82" stroke-width="1"/><rect x="3.5" y="3.5" width="10" height="10" fill="#fff" stroke="#005a82" stroke-width="1"/><rect x="3" y="3" width="11" height="2" fill="#000"/><path d="M5 6 L8 8.5 L5 11 Z" fill="#0000e0"/><rect x="8.5" y="6" width="2" height="1" fill="#e00000"/><rect x="8.5" y="8" width="2" height="1" fill="#e00000"/><rect x="8.5" y="10" width="2" height="1" fill="#e00000"/><rect x="11.5" y="5.5" width="1" height="7" fill="#005a82"/></svg>
<div class="df " style="left:893px;top:586px;width:26px;height:18px;line-height:17px;text-align:right;padding-right:2px;padding-left:0;">0</div>
<div class="" style="left:947px;top:588px;width:10px;height:10px;background:#fff;border-top:1px solid #33465e;border-left:1px solid #33465e"></div>
<div class="bt " style="left:982px;top:588px;width:88px;height:15px;line-height:15px;line-height:16px;letter-spacing:0.25px;">Bedarfsprüfung</div>
<div class="df " style="left:173px;top:605px;width:33px;height:18px;line-height:17px;">50</div>
<div class="df " style="left:207px;top:605px;width:80px;height:18px;line-height:17px;">POLST</div>
<svg style="left:289px;top:607px" width="16" height="16" viewBox="0 0 16 16" shape-rendering="crispEdges"><rect x="0" y="0" width="16" height="16" rx="2" fill="#6f8db0"/><rect x="0" y="0" width="15" height="15" rx="2" fill="#c8c8c8"/><path d="M1.5 10 V1.5 H9.5 M1.5 9.5 H4" fill="none" stroke="#005a82" stroke-width="1"/><rect x="3.5" y="3.5" width="10" height="10" fill="#fff" stroke="#005a82" stroke-width="1"/><rect x="3" y="3" width="11" height="2" fill="#000"/><path d="M5 6 L8 8.5 L5 11 Z" fill="#0000e0"/><rect x="8.5" y="6" width="2" height="1" fill="#e00000"/><rect x="8.5" y="8" width="2" height="1" fill="#e00000"/><rect x="8.5" y="10" width="2" height="1" fill="#e00000"/><rect x="11.5" y="5.5" width="1" height="7" fill="#005a82"/></svg>
<div class="df " style="left:304px;top:605px;width:33px;height:18px;line-height:17px;">10</div>
<div class="df " style="left:338px;top:605px;width:80px;height:18px;line-height:17px;">Ungarn 1</div>
<svg style="left:421px;top:607px" width="16" height="16" viewBox="0 0 16 16" shape-rendering="crispEdges"><rect x="0" y="0" width="16" height="16" rx="2" fill="#6f8db0"/><rect x="0" y="0" width="15" height="15" rx="2" fill="#c8c8c8"/><path d="M1.5 10 V1.5 H9.5 M1.5 9.5 H4" fill="none" stroke="#005a82" stroke-width="1"/><rect x="3.5" y="3.5" width="10" height="10" fill="#fff" stroke="#005a82" stroke-width="1"/><rect x="3" y="3" width="11" height="2" fill="#000"/><path d="M5 6 L8 8.5 L5 11 Z" fill="#0000e0"/><rect x="8.5" y="6" width="2" height="1" fill="#e00000"/><rect x="8.5" y="8" width="2" height="1" fill="#e00000"/><rect x="8.5" y="10" width="2" height="1" fill="#e00000"/><rect x="11.5" y="5.5" width="1" height="7" fill="#005a82"/></svg>
<div class="df " style="left:436px;top:605px;width:27px;height:18px;line-height:17px;">6</div>
<div class="df " style="left:464px;top:605px;width:120px;height:18px;line-height:17px;">Lindemann</div>
<svg style="left:586px;top:607px" width="16" height="16" viewBox="0 0 16 16" shape-rendering="crispEdges"><rect x="0" y="0" width="16" height="16" rx="2" fill="#6f8db0"/><rect x="0" y="0" width="15" height="15" rx="2" fill="#c8c8c8"/><path d="M1.5 10 V1.5 H9.5 M1.5 9.5 H4" fill="none" stroke="#005a82" stroke-width="1"/><rect x="3.5" y="3.5" width="10" height="10" fill="#fff" stroke="#005a82" stroke-width="1"/><rect x="3" y="3" width="11" height="2" fill="#000"/><path d="M5 6 L8 8.5 L5 11 Z" fill="#0000e0"/><rect x="8.5" y="6" width="2" height="1" fill="#e00000"/><rect x="8.5" y="8" width="2" height="1" fill="#e00000"/><rect x="8.5" y="10" width="2" height="1" fill="#e00000"/><rect x="11.5" y="5.5" width="1" height="7" fill="#005a82"/></svg>
<div class="df " style="left:602px;top:605px;width:26px;height:18px;line-height:17px;">2</div>
<div class="df " style="left:629px;top:605px;width:120px;height:18px;line-height:17px;">Zentrallager BT Leuchte</div>
<svg style="left:752px;top:607px" width="16" height="16" viewBox="0 0 16 16" shape-rendering="crispEdges"><rect x="0" y="0" width="16" height="16" rx="2" fill="#6f8db0"/><rect x="0" y="0" width="15" height="15" rx="2" fill="#c8c8c8"/><path d="M1.5 10 V1.5 H9.5 M1.5 9.5 H4" fill="none" stroke="#005a82" stroke-width="1"/><rect x="3.5" y="3.5" width="10" height="10" fill="#fff" stroke="#005a82" stroke-width="1"/><rect x="3" y="3" width="11" height="2" fill="#000"/><path d="M5 6 L8 8.5 L5 11 Z" fill="#0000e0"/><rect x="8.5" y="6" width="2" height="1" fill="#e00000"/><rect x="8.5" y="8" width="2" height="1" fill="#e00000"/><rect x="8.5" y="10" width="2" height="1" fill="#e00000"/><rect x="11.5" y="5.5" width="1" height="7" fill="#005a82"/></svg>
<div class="df " style="left:767px;top:605px;width:27px;height:18px;line-height:17px;">60</div>
<div class="df " style="left:795px;top:605px;width:80px;height:18px;line-height:17px;">ENDKTR</div>
<svg style="left:877px;top:607px" width="16" height="16" viewBox="0 0 16 16" shape-rendering="crispEdges"><rect x="0" y="0" width="16" height="16" rx="2" fill="#6f8db0"/><rect x="0" y="0" width="15" height="15" rx="2" fill="#c8c8c8"/><path d="M1.5 10 V1.5 H9.5 M1.5 9.5 H4" fill="none" stroke="#005a82" stroke-width="1"/><rect x="3.5" y="3.5" width="10" height="10" fill="#fff" stroke="#005a82" stroke-width="1"/><rect x="3" y="3" width="11" height="2" fill="#000"/><path d="M5 6 L8 8.5 L5 11 Z" fill="#0000e0"/><rect x="8.5" y="6" width="2" height="1" fill="#e00000"/><rect x="8.5" y="8" width="2" height="1" fill="#e00000"/><rect x="8.5" y="10" width="2" height="1" fill="#e00000"/><rect x="11.5" y="5.5" width="1" height="7" fill="#005a82"/></svg>
<div class="df " style="left:893px;top:605px;width:26px;height:18px;line-height:17px;text-align:right;padding-right:2px;padding-left:0;">0</div>
<div class="" style="left:947px;top:607px;width:10px;height:10px;background:#fff;border-top:1px solid #33465e;border-left:1px solid #33465e"></div>
<div class="bt " style="left:982px;top:607px;width:88px;height:15px;line-height:15px;line-height:16px;letter-spacing:0.25px;">Bedarfsprüfung</div>
<div class="df " style="left:173px;top:624px;width:33px;height:18px;line-height:17px;">60</div>
<div class="df " style="left:207px;top:624px;width:80px;height:18px;line-height:17px;">ENDKTR</div>
<svg style="left:289px;top:626px" width="16" height="16" viewBox="0 0 16 16" shape-rendering="crispEdges"><rect x="0" y="0" width="16" height="16" rx="2" fill="#6f8db0"/><rect x="0" y="0" width="15" height="15" rx="2" fill="#c8c8c8"/><path d="M1.5 10 V1.5 H9.5 M1.5 9.5 H4" fill="none" stroke="#005a82" stroke-width="1"/><rect x="3.5" y="3.5" width="10" height="10" fill="#fff" stroke="#005a82" stroke-width="1"/><rect x="3" y="3" width="11" height="2" fill="#000"/><path d="M5 6 L8 8.5 L5 11 Z" fill="#0000e0"/><rect x="8.5" y="6" width="2" height="1" fill="#e00000"/><rect x="8.5" y="8" width="2" height="1" fill="#e00000"/><rect x="8.5" y="10" width="2" height="1" fill="#e00000"/><rect x="11.5" y="5.5" width="1" height="7" fill="#005a82"/></svg>
<div class="df " style="left:304px;top:624px;width:33px;height:18px;line-height:17px;">10</div>
<div class="df " style="left:338px;top:624px;width:80px;height:18px;line-height:17px;">Ungarn 1</div>
<svg style="left:421px;top:626px" width="16" height="16" viewBox="0 0 16 16" shape-rendering="crispEdges"><rect x="0" y="0" width="16" height="16" rx="2" fill="#6f8db0"/><rect x="0" y="0" width="15" height="15" rx="2" fill="#c8c8c8"/><path d="M1.5 10 V1.5 H9.5 M1.5 9.5 H4" fill="none" stroke="#005a82" stroke-width="1"/><rect x="3.5" y="3.5" width="10" height="10" fill="#fff" stroke="#005a82" stroke-width="1"/><rect x="3" y="3" width="11" height="2" fill="#000"/><path d="M5 6 L8 8.5 L5 11 Z" fill="#0000e0"/><rect x="8.5" y="6" width="2" height="1" fill="#e00000"/><rect x="8.5" y="8" width="2" height="1" fill="#e00000"/><rect x="8.5" y="10" width="2" height="1" fill="#e00000"/><rect x="11.5" y="5.5" width="1" height="7" fill="#005a82"/></svg>
<div class="df " style="left:436px;top:624px;width:27px;height:18px;line-height:17px;">6</div>
<div class="df " style="left:464px;top:624px;width:120px;height:18px;line-height:17px;">Lindemann</div>
<svg style="left:586px;top:626px" width="16" height="16" viewBox="0 0 16 16" shape-rendering="crispEdges"><rect x="0" y="0" width="16" height="16" rx="2" fill="#6f8db0"/><rect x="0" y="0" width="15" height="15" rx="2" fill="#c8c8c8"/><path d="M1.5 10 V1.5 H9.5 M1.5 9.5 H4" fill="none" stroke="#005a82" stroke-width="1"/><rect x="3.5" y="3.5" width="10" height="10" fill="#fff" stroke="#005a82" stroke-width="1"/><rect x="3" y="3" width="11" height="2" fill="#000"/><path d="M5 6 L8 8.5 L5 11 Z" fill="#0000e0"/><rect x="8.5" y="6" width="2" height="1" fill="#e00000"/><rect x="8.5" y="8" width="2" height="1" fill="#e00000"/><rect x="8.5" y="10" width="2" height="1" fill="#e00000"/><rect x="11.5" y="5.5" width="1" height="7" fill="#005a82"/></svg>
<div class="df " style="left:602px;top:624px;width:26px;height:18px;line-height:17px;">2</div>
<div class="df " style="left:629px;top:624px;width:120px;height:18px;line-height:17px;">Zentrallager BT Leuchte</div>
<svg style="left:752px;top:626px" width="16" height="16" viewBox="0 0 16 16" shape-rendering="crispEdges"><rect x="0" y="0" width="16" height="16" rx="2" fill="#6f8db0"/><rect x="0" y="0" width="15" height="15" rx="2" fill="#c8c8c8"/><path d="M1.5 10 V1.5 H9.5 M1.5 9.5 H4" fill="none" stroke="#005a82" stroke-width="1"/><rect x="3.5" y="3.5" width="10" height="10" fill="#fff" stroke="#005a82" stroke-width="1"/><rect x="3" y="3" width="11" height="2" fill="#000"/><path d="M5 6 L8 8.5 L5 11 Z" fill="#0000e0"/><rect x="8.5" y="6" width="2" height="1" fill="#e00000"/><rect x="8.5" y="8" width="2" height="1" fill="#e00000"/><rect x="8.5" y="10" width="2" height="1" fill="#e00000"/><rect x="11.5" y="5.5" width="1" height="7" fill="#005a82"/></svg>
<div class="df " style="left:767px;top:624px;width:27px;height:18px;line-height:17px;">103</div>
<div class="df " style="left:795px;top:624px;width:80px;height:18px;line-height:17px;">VPK</div>
<svg style="left:877px;top:626px" width="16" height="16" viewBox="0 0 16 16" shape-rendering="crispEdges"><rect x="0" y="0" width="16" height="16" rx="2" fill="#6f8db0"/><rect x="0" y="0" width="15" height="15" rx="2" fill="#c8c8c8"/><path d="M1.5 10 V1.5 H9.5 M1.5 9.5 H4" fill="none" stroke="#005a82" stroke-width="1"/><rect x="3.5" y="3.5" width="10" height="10" fill="#fff" stroke="#005a82" stroke-width="1"/><rect x="3" y="3" width="11" height="2" fill="#000"/><path d="M5 6 L8 8.5 L5 11 Z" fill="#0000e0"/><rect x="8.5" y="6" width="2" height="1" fill="#e00000"/><rect x="8.5" y="8" width="2" height="1" fill="#e00000"/><rect x="8.5" y="10" width="2" height="1" fill="#e00000"/><rect x="11.5" y="5.5" width="1" height="7" fill="#005a82"/></svg>
<div class="df " style="left:893px;top:624px;width:26px;height:18px;line-height:17px;text-align:right;padding-right:2px;padding-left:0;">0</div>
<div class="" style="left:947px;top:626px;width:10px;height:10px;background:#fff;border-top:1px solid #33465e;border-left:1px solid #33465e"></div>
<div class="bt " style="left:982px;top:626px;width:88px;height:15px;line-height:15px;line-height:16px;letter-spacing:0.25px;">Bedarfsprüfung</div>
<div class="df " style="left:173px;top:642px;width:33px;height:18px;line-height:17px;">103</div>
<div class="df " style="left:207px;top:642px;width:80px;height:18px;line-height:17px;">VPK</div>
<svg style="left:289px;top:644px" width="16" height="16" viewBox="0 0 16 16" shape-rendering="crispEdges"><rect x="0" y="0" width="16" height="16" rx="2" fill="#6f8db0"/><rect x="0" y="0" width="15" height="15" rx="2" fill="#c8c8c8"/><path d="M1.5 10 V1.5 H9.5 M1.5 9.5 H4" fill="none" stroke="#005a82" stroke-width="1"/><rect x="3.5" y="3.5" width="10" height="10" fill="#fff" stroke="#005a82" stroke-width="1"/><rect x="3" y="3" width="11" height="2" fill="#000"/><path d="M5 6 L8 8.5 L5 11 Z" fill="#0000e0"/><rect x="8.5" y="6" width="2" height="1" fill="#e00000"/><rect x="8.5" y="8" width="2" height="1" fill="#e00000"/><rect x="8.5" y="10" width="2" height="1" fill="#e00000"/><rect x="11.5" y="5.5" width="1" height="7" fill="#005a82"/></svg>
<div class="df " style="left:304px;top:642px;width:33px;height:18px;line-height:17px;">10</div>
<div class="df " style="left:338px;top:642px;width:80px;height:18px;line-height:17px;">Ungarn 1</div>
<svg style="left:421px;top:644px" width="16" height="16" viewBox="0 0 16 16" shape-rendering="crispEdges"><rect x="0" y="0" width="16" height="16" rx="2" fill="#6f8db0"/><rect x="0" y="0" width="15" height="15" rx="2" fill="#c8c8c8"/><path d="M1.5 10 V1.5 H9.5 M1.5 9.5 H4" fill="none" stroke="#005a82" stroke-width="1"/><rect x="3.5" y="3.5" width="10" height="10" fill="#fff" stroke="#005a82" stroke-width="1"/><rect x="3" y="3" width="11" height="2" fill="#000"/><path d="M5 6 L8 8.5 L5 11 Z" fill="#0000e0"/><rect x="8.5" y="6" width="2" height="1" fill="#e00000"/><rect x="8.5" y="8" width="2" height="1" fill="#e00000"/><rect x="8.5" y="10" width="2" height="1" fill="#e00000"/><rect x="11.5" y="5.5" width="1" height="7" fill="#005a82"/></svg>
<div class="df " style="left:436px;top:642px;width:27px;height:18px;line-height:17px;">6</div>
<div class="df " style="left:464px;top:642px;width:120px;height:18px;line-height:17px;">Lindemann</div>
<svg style="left:586px;top:644px" width="16" height="16" viewBox="0 0 16 16" shape-rendering="crispEdges"><rect x="0" y="0" width="16" height="16" rx="2" fill="#6f8db0"/><rect x="0" y="0" width="15" height="15" rx="2" fill="#c8c8c8"/><path d="M1.5 10 V1.5 H9.5 M1.5 9.5 H4" fill="none" stroke="#005a82" stroke-width="1"/><rect x="3.5" y="3.5" width="10" height="10" fill="#fff" stroke="#005a82" stroke-width="1"/><rect x="3" y="3" width="11" height="2" fill="#000"/><path d="M5 6 L8 8.5 L5 11 Z" fill="#0000e0"/><rect x="8.5" y="6" width="2" height="1" fill="#e00000"/><rect x="8.5" y="8" width="2" height="1" fill="#e00000"/><rect x="8.5" y="10" width="2" height="1" fill="#e00000"/><rect x="11.5" y="5.5" width="1" height="7" fill="#005a82"/></svg>
<div class="df " style="left:602px;top:642px;width:26px;height:18px;line-height:17px;">2</div>
<div class="df " style="left:629px;top:642px;width:120px;height:18px;line-height:17px;">Zentrallager BT Leuchte</div>
<svg style="left:752px;top:644px" width="16" height="16" viewBox="0 0 16 16" shape-rendering="crispEdges"><rect x="0" y="0" width="16" height="16" rx="2" fill="#6f8db0"/><rect x="0" y="0" width="15" height="15" rx="2" fill="#c8c8c8"/><path d="M1.5 10 V1.5 H9.5 M1.5 9.5 H4" fill="none" stroke="#005a82" stroke-width="1"/><rect x="3.5" y="3.5" width="10" height="10" fill="#fff" stroke="#005a82" stroke-width="1"/><rect x="3" y="3" width="11" height="2" fill="#000"/><path d="M5 6 L8 8.5 L5 11 Z" fill="#0000e0"/><rect x="8.5" y="6" width="2" height="1" fill="#e00000"/><rect x="8.5" y="8" width="2" height="1" fill="#e00000"/><rect x="8.5" y="10" width="2" height="1" fill="#e00000"/><rect x="11.5" y="5.5" width="1" height="7" fill="#005a82"/></svg>
<div class="df " style="left:767px;top:642px;width:27px;height:18px;line-height:17px;"></div>
<div class="df " style="left:795px;top:642px;width:80px;height:18px;line-height:17px;"></div>
<svg style="left:877px;top:644px" width="16" height="16" viewBox="0 0 16 16" shape-rendering="crispEdges"><rect x="0" y="0" width="16" height="16" rx="2" fill="#6f8db0"/><rect x="0" y="0" width="15" height="15" rx="2" fill="#c8c8c8"/><path d="M1.5 10 V1.5 H9.5 M1.5 9.5 H4" fill="none" stroke="#005a82" stroke-width="1"/><rect x="3.5" y="3.5" width="10" height="10" fill="#fff" stroke="#005a82" stroke-width="1"/><rect x="3" y="3" width="11" height="2" fill="#000"/><path d="M5 6 L8 8.5 L5 11 Z" fill="#0000e0"/><rect x="8.5" y="6" width="2" height="1" fill="#e00000"/><rect x="8.5" y="8" width="2" height="1" fill="#e00000"/><rect x="8.5" y="10" width="2" height="1" fill="#e00000"/><rect x="11.5" y="5.5" width="1" height="7" fill="#005a82"/></svg>
<div class="df " style="left:893px;top:642px;width:26px;height:18px;line-height:17px;text-align:right;padding-right:2px;padding-left:0;">0</div>
<div class="" style="left:947px;top:644px;width:10px;height:10px;background:#fff;border-top:1px solid #33465e;border-left:1px solid #33465e"></div>
<div class="bt " style="left:982px;top:644px;width:88px;height:15px;line-height:15px;line-height:16px;letter-spacing:0.25px;">Bedarfsprüfung</div>
<div class="df " style="left:173px;top:661px;width:33px;height:18px;line-height:17px;"></div>
<div class="df " style="left:207px;top:661px;width:80px;height:18px;line-height:17px;"></div>
<svg style="left:289px;top:663px" width="16" height="16" viewBox="0 0 16 16" shape-rendering="crispEdges"><rect x="0" y="0" width="16" height="16" rx="2" fill="#6f8db0"/><rect x="0" y="0" width="15" height="15" rx="2" fill="#c8c8c8"/><path d="M1.5 10 V1.5 H9.5 M1.5 9.5 H4" fill="none" stroke="#8c8c8c" stroke-width="1"/><rect x="3.5" y="3.5" width="10" height="10" fill="#e6e6e6" stroke="#8c8c8c" stroke-width="1"/><rect x="3" y="3" width="11" height="2" fill="#9a9a9a"/><path d="M5 6 L8 8.5 L5 11 Z" fill="#9a9a9a"/><rect x="8.5" y="6" width="2" height="1" fill="#a8a8a8"/><rect x="8.5" y="8" width="2" height="1" fill="#a8a8a8"/><rect x="8.5" y="10" width="2" height="1" fill="#a8a8a8"/><rect x="11.5" y="5.5" width="1" height="7" fill="#8c8c8c"/></svg>
<div class="df " style="left:304px;top:661px;width:33px;height:18px;line-height:17px;"></div>
<div class="df " style="left:338px;top:661px;width:80px;height:18px;line-height:17px;"></div>
<svg style="left:421px;top:663px" width="16" height="16" viewBox="0 0 16 16" shape-rendering="crispEdges"><rect x="0" y="0" width="16" height="16" rx="2" fill="#6f8db0"/><rect x="0" y="0" width="15" height="15" rx="2" fill="#c8c8c8"/><path d="M1.5 10 V1.5 H9.5 M1.5 9.5 H4" fill="none" stroke="#8c8c8c" stroke-width="1"/><rect x="3.5" y="3.5" width="10" height="10" fill="#e6e6e6" stroke="#8c8c8c" stroke-width="1"/><rect x="3" y="3" width="11" height="2" fill="#9a9a9a"/><path d="M5 6 L8 8.5 L5 11 Z" fill="#9a9a9a"/><rect x="8.5" y="6" width="2" height="1" fill="#a8a8a8"/><rect x="8.5" y="8" width="2" height="1" fill="#a8a8a8"/><rect x="8.5" y="10" width="2" height="1" fill="#a8a8a8"/><rect x="11.5" y="5.5" width="1" height="7" fill="#8c8c8c"/></svg>
<div class="df " style="left:436px;top:661px;width:27px;height:18px;line-height:17px;"></div>
<div class="df " style="left:464px;top:661px;width:120px;height:18px;line-height:17px;"></div>
<svg style="left:586px;top:663px" width="16" height="16" viewBox="0 0 16 16" shape-rendering="crispEdges"><rect x="0" y="0" width="16" height="16" rx="2" fill="#6f8db0"/><rect x="0" y="0" width="15" height="15" rx="2" fill="#c8c8c8"/><path d="M1.5 10 V1.5 H9.5 M1.5 9.5 H4" fill="none" stroke="#8c8c8c" stroke-width="1"/><rect x="3.5" y="3.5" width="10" height="10" fill="#e6e6e6" stroke="#8c8c8c" stroke-width="1"/><rect x="3" y="3" width="11" height="2" fill="#9a9a9a"/><path d="M5 6 L8 8.5 L5 11 Z" fill="#9a9a9a"/><rect x="8.5" y="6" width="2" height="1" fill="#a8a8a8"/><rect x="8.5" y="8" width="2" height="1" fill="#a8a8a8"/><rect x="8.5" y="10" width="2" height="1" fill="#a8a8a8"/><rect x="11.5" y="5.5" width="1" height="7" fill="#8c8c8c"/></svg>
<div class="df " style="left:602px;top:661px;width:26px;height:18px;line-height:17px;"></div>
<div class="df " style="left:629px;top:661px;width:120px;height:18px;line-height:17px;"></div>
<svg style="left:752px;top:663px" width="16" height="16" viewBox="0 0 16 16" shape-rendering="crispEdges"><rect x="0" y="0" width="16" height="16" rx="2" fill="#6f8db0"/><rect x="0" y="0" width="15" height="15" rx="2" fill="#c8c8c8"/><path d="M1.5 10 V1.5 H9.5 M1.5 9.5 H4" fill="none" stroke="#8c8c8c" stroke-width="1"/><rect x="3.5" y="3.5" width="10" height="10" fill="#e6e6e6" stroke="#8c8c8c" stroke-width="1"/><rect x="3" y="3" width="11" height="2" fill="#9a9a9a"/><path d="M5 6 L8 8.5 L5 11 Z" fill="#9a9a9a"/><rect x="8.5" y="6" width="2" height="1" fill="#a8a8a8"/><rect x="8.5" y="8" width="2" height="1" fill="#a8a8a8"/><rect x="8.5" y="10" width="2" height="1" fill="#a8a8a8"/><rect x="11.5" y="5.5" width="1" height="7" fill="#8c8c8c"/></svg>
<div class="df " style="left:767px;top:661px;width:27px;height:18px;line-height:17px;"></div>
<div class="df " style="left:795px;top:661px;width:80px;height:18px;line-height:17px;"></div>
<svg style="left:877px;top:663px" width="16" height="16" viewBox="0 0 16 16" shape-rendering="crispEdges"><rect x="0" y="0" width="16" height="16" rx="2" fill="#6f8db0"/><rect x="0" y="0" width="15" height="15" rx="2" fill="#c8c8c8"/><path d="M1.5 10 V1.5 H9.5 M1.5 9.5 H4" fill="none" stroke="#8c8c8c" stroke-width="1"/><rect x="3.5" y="3.5" width="10" height="10" fill="#e6e6e6" stroke="#8c8c8c" stroke-width="1"/><rect x="3" y="3" width="11" height="2" fill="#9a9a9a"/><path d="M5 6 L8 8.5 L5 11 Z" fill="#9a9a9a"/><rect x="8.5" y="6" width="2" height="1" fill="#a8a8a8"/><rect x="8.5" y="8" width="2" height="1" fill="#a8a8a8"/><rect x="8.5" y="10" width="2" height="1" fill="#a8a8a8"/><rect x="11.5" y="5.5" width="1" height="7" fill="#8c8c8c"/></svg>
<div class="df " style="left:893px;top:661px;width:26px;height:18px;line-height:17px;text-align:right;padding-right:2px;padding-left:0;"></div>
<div class="" style="left:947px;top:663px;width:10px;height:10px;background:#d0d0d0;border-top:1px solid #33465e;border-left:1px solid #33465e"></div>
<div class="bt  dis" style="left:982px;top:663px;width:88px;height:15px;line-height:15px;line-height:16px;letter-spacing:0.25px;">Bedarfsprüfung</div>
<div class="df " style="left:173px;top:680px;width:33px;height:18px;line-height:17px;"></div>
<div class="df " style="left:207px;top:680px;width:80px;height:18px;line-height:17px;"></div>
<svg style="left:289px;top:682px" width="16" height="16" viewBox="0 0 16 16" shape-rendering="crispEdges"><rect x="0" y="0" width="16" height="16" rx="2" fill="#6f8db0"/><rect x="0" y="0" width="15" height="15" rx="2" fill="#c8c8c8"/><path d="M1.5 10 V1.5 H9.5 M1.5 9.5 H4" fill="none" stroke="#8c8c8c" stroke-width="1"/><rect x="3.5" y="3.5" width="10" height="10" fill="#e6e6e6" stroke="#8c8c8c" stroke-width="1"/><rect x="3" y="3" width="11" height="2" fill="#9a9a9a"/><path d="M5 6 L8 8.5 L5 11 Z" fill="#9a9a9a"/><rect x="8.5" y="6" width="2" height="1" fill="#a8a8a8"/><rect x="8.5" y="8" width="2" height="1" fill="#a8a8a8"/><rect x="8.5" y="10" width="2" height="1" fill="#a8a8a8"/><rect x="11.5" y="5.5" width="1" height="7" fill="#8c8c8c"/></svg>
<div class="df " style="left:304px;top:680px;width:33px;height:18px;line-height:17px;"></div>
<div class="df " style="left:338px;top:680px;width:80px;height:18px;line-height:17px;"></div>
<svg style="left:421px;top:682px" width="16" height="16" viewBox="0 0 16 16" shape-rendering="crispEdges"><rect x="0" y="0" width="16" height="16" rx="2" fill="#6f8db0"/><rect x="0" y="0" width="15" height="15" rx="2" fill="#c8c8c8"/><path d="M1.5 10 V1.5 H9.5 M1.5 9.5 H4" fill="none" stroke="#8c8c8c" stroke-width="1"/><rect x="3.5" y="3.5" width="10" height="10" fill="#e6e6e6" stroke="#8c8c8c" stroke-width="1"/><rect x="3" y="3" width="11" height="2" fill="#9a9a9a"/><path d="M5 6 L8 8.5 L5 11 Z" fill="#9a9a9a"/><rect x="8.5" y="6" width="2" height="1" fill="#a8a8a8"/><rect x="8.5" y="8" width="2" height="1" fill="#a8a8a8"/><rect x="8.5" y="10" width="2" height="1" fill="#a8a8a8"/><rect x="11.5" y="5.5" width="1" height="7" fill="#8c8c8c"/></svg>
<div class="df " style="left:436px;top:680px;width:27px;height:18px;line-height:17px;"></div>
<div class="df " style="left:464px;top:680px;width:120px;height:18px;line-height:17px;"></div>
<svg style="left:586px;top:682px" width="16" height="16" viewBox="0 0 16 16" shape-rendering="crispEdges"><rect x="0" y="0" width="16" height="16" rx="2" fill="#6f8db0"/><rect x="0" y="0" width="15" height="15" rx="2" fill="#c8c8c8"/><path d="M1.5 10 V1.5 H9.5 M1.5 9.5 H4" fill="none" stroke="#8c8c8c" stroke-width="1"/><rect x="3.5" y="3.5" width="10" height="10" fill="#e6e6e6" stroke="#8c8c8c" stroke-width="1"/><rect x="3" y="3" width="11" height="2" fill="#9a9a9a"/><path d="M5 6 L8 8.5 L5 11 Z" fill="#9a9a9a"/><rect x="8.5" y="6" width="2" height="1" fill="#a8a8a8"/><rect x="8.5" y="8" width="2" height="1" fill="#a8a8a8"/><rect x="8.5" y="10" width="2" height="1" fill="#a8a8a8"/><rect x="11.5" y="5.5" width="1" height="7" fill="#8c8c8c"/></svg>
<div class="df " style="left:602px;top:680px;width:26px;height:18px;line-height:17px;"></div>
<div class="df " style="left:629px;top:680px;width:120px;height:18px;line-height:17px;"></div>
<svg style="left:752px;top:682px" width="16" height="16" viewBox="0 0 16 16" shape-rendering="crispEdges"><rect x="0" y="0" width="16" height="16" rx="2" fill="#6f8db0"/><rect x="0" y="0" width="15" height="15" rx="2" fill="#c8c8c8"/><path d="M1.5 10 V1.5 H9.5 M1.5 9.5 H4" fill="none" stroke="#8c8c8c" stroke-width="1"/><rect x="3.5" y="3.5" width="10" height="10" fill="#e6e6e6" stroke="#8c8c8c" stroke-width="1"/><rect x="3" y="3" width="11" height="2" fill="#9a9a9a"/><path d="M5 6 L8 8.5 L5 11 Z" fill="#9a9a9a"/><rect x="8.5" y="6" width="2" height="1" fill="#a8a8a8"/><rect x="8.5" y="8" width="2" height="1" fill="#a8a8a8"/><rect x="8.5" y="10" width="2" height="1" fill="#a8a8a8"/><rect x="11.5" y="5.5" width="1" height="7" fill="#8c8c8c"/></svg>
<div class="df " style="left:767px;top:680px;width:27px;height:18px;line-height:17px;"></div>
<div class="df " style="left:795px;top:680px;width:80px;height:18px;line-height:17px;"></div>
<svg style="left:877px;top:682px" width="16" height="16" viewBox="0 0 16 16" shape-rendering="crispEdges"><rect x="0" y="0" width="16" height="16" rx="2" fill="#6f8db0"/><rect x="0" y="0" width="15" height="15" rx="2" fill="#c8c8c8"/><path d="M1.5 10 V1.5 H9.5 M1.5 9.5 H4" fill="none" stroke="#8c8c8c" stroke-width="1"/><rect x="3.5" y="3.5" width="10" height="10" fill="#e6e6e6" stroke="#8c8c8c" stroke-width="1"/><rect x="3" y="3" width="11" height="2" fill="#9a9a9a"/><path d="M5 6 L8 8.5 L5 11 Z" fill="#9a9a9a"/><rect x="8.5" y="6" width="2" height="1" fill="#a8a8a8"/><rect x="8.5" y="8" width="2" height="1" fill="#a8a8a8"/><rect x="8.5" y="10" width="2" height="1" fill="#a8a8a8"/><rect x="11.5" y="5.5" width="1" height="7" fill="#8c8c8c"/></svg>
<div class="df " style="left:893px;top:680px;width:26px;height:18px;line-height:17px;text-align:right;padding-right:2px;padding-left:0;"></div>
<div class="" style="left:947px;top:682px;width:10px;height:10px;background:#d0d0d0;border-top:1px solid #33465e;border-left:1px solid #33465e"></div>
<div class="bt  dis" style="left:982px;top:682px;width:88px;height:15px;line-height:15px;line-height:16px;letter-spacing:0.25px;">Bedarfsprüfung</div>
<div class="df " style="left:173px;top:698px;width:33px;height:18px;line-height:17px;"></div>
<div class="df " style="left:207px;top:698px;width:80px;height:18px;line-height:17px;"></div>
<svg style="left:289px;top:700px" width="16" height="16" viewBox="0 0 16 16" shape-rendering="crispEdges"><rect x="0" y="0" width="16" height="16" rx="2" fill="#6f8db0"/><rect x="0" y="0" width="15" height="15" rx="2" fill="#c8c8c8"/><path d="M1.5 10 V1.5 H9.5 M1.5 9.5 H4" fill="none" stroke="#8c8c8c" stroke-width="1"/><rect x="3.5" y="3.5" width="10" height="10" fill="#e6e6e6" stroke="#8c8c8c" stroke-width="1"/><rect x="3" y="3" width="11" height="2" fill="#9a9a9a"/><path d="M5 6 L8 8.5 L5 11 Z" fill="#9a9a9a"/><rect x="8.5" y="6" width="2" height="1" fill="#a8a8a8"/><rect x="8.5" y="8" width="2" height="1" fill="#a8a8a8"/><rect x="8.5" y="10" width="2" height="1" fill="#a8a8a8"/><rect x="11.5" y="5.5" width="1" height="7" fill="#8c8c8c"/></svg>
<div class="df " style="left:304px;top:698px;width:33px;height:18px;line-height:17px;"></div>
<div class="df " style="left:338px;top:698px;width:80px;height:18px;line-height:17px;"></div>
<svg style="left:421px;top:700px" width="16" height="16" viewBox="0 0 16 16" shape-rendering="crispEdges"><rect x="0" y="0" width="16" height="16" rx="2" fill="#6f8db0"/><rect x="0" y="0" width="15" height="15" rx="2" fill="#c8c8c8"/><path d="M1.5 10 V1.5 H9.5 M1.5 9.5 H4" fill="none" stroke="#8c8c8c" stroke-width="1"/><rect x="3.5" y="3.5" width="10" height="10" fill="#e6e6e6" stroke="#8c8c8c" stroke-width="1"/><rect x="3" y="3" width="11" height="2" fill="#9a9a9a"/><path d="M5 6 L8 8.5 L5 11 Z" fill="#9a9a9a"/><rect x="8.5" y="6" width="2" height="1" fill="#a8a8a8"/><rect x="8.5" y="8" width="2" height="1" fill="#a8a8a8"/><rect x="8.5" y="10" width="2" height="1" fill="#a8a8a8"/><rect x="11.5" y="5.5" width="1" height="7" fill="#8c8c8c"/></svg>
<div class="df " style="left:436px;top:698px;width:27px;height:18px;line-height:17px;"></div>
<div class="df " style="left:464px;top:698px;width:120px;height:18px;line-height:17px;"></div>
<svg style="left:586px;top:700px" width="16" height="16" viewBox="0 0 16 16" shape-rendering="crispEdges"><rect x="0" y="0" width="16" height="16" rx="2" fill="#6f8db0"/><rect x="0" y="0" width="15" height="15" rx="2" fill="#c8c8c8"/><path d="M1.5 10 V1.5 H9.5 M1.5 9.5 H4" fill="none" stroke="#8c8c8c" stroke-width="1"/><rect x="3.5" y="3.5" width="10" height="10" fill="#e6e6e6" stroke="#8c8c8c" stroke-width="1"/><rect x="3" y="3" width="11" height="2" fill="#9a9a9a"/><path d="M5 6 L8 8.5 L5 11 Z" fill="#9a9a9a"/><rect x="8.5" y="6" width="2" height="1" fill="#a8a8a8"/><rect x="8.5" y="8" width="2" height="1" fill="#a8a8a8"/><rect x="8.5" y="10" width="2" height="1" fill="#a8a8a8"/><rect x="11.5" y="5.5" width="1" height="7" fill="#8c8c8c"/></svg>
<div class="df " style="left:602px;top:698px;width:26px;height:18px;line-height:17px;"></div>
<div class="df " style="left:629px;top:698px;width:120px;height:18px;line-height:17px;"></div>
<svg style="left:752px;top:700px" width="16" height="16" viewBox="0 0 16 16" shape-rendering="crispEdges"><rect x="0" y="0" width="16" height="16" rx="2" fill="#6f8db0"/><rect x="0" y="0" width="15" height="15" rx="2" fill="#c8c8c8"/><path d="M1.5 10 V1.5 H9.5 M1.5 9.5 H4" fill="none" stroke="#8c8c8c" stroke-width="1"/><rect x="3.5" y="3.5" width="10" height="10" fill="#e6e6e6" stroke="#8c8c8c" stroke-width="1"/><rect x="3" y="3" width="11" height="2" fill="#9a9a9a"/><path d="M5 6 L8 8.5 L5 11 Z" fill="#9a9a9a"/><rect x="8.5" y="6" width="2" height="1" fill="#a8a8a8"/><rect x="8.5" y="8" width="2" height="1" fill="#a8a8a8"/><rect x="8.5" y="10" width="2" height="1" fill="#a8a8a8"/><rect x="11.5" y="5.5" width="1" height="7" fill="#8c8c8c"/></svg>
<div class="df " style="left:767px;top:698px;width:27px;height:18px;line-height:17px;"></div>
<div class="df " style="left:795px;top:698px;width:80px;height:18px;line-height:17px;"></div>
<svg style="left:877px;top:700px" width="16" height="16" viewBox="0 0 16 16" shape-rendering="crispEdges"><rect x="0" y="0" width="16" height="16" rx="2" fill="#6f8db0"/><rect x="0" y="0" width="15" height="15" rx="2" fill="#c8c8c8"/><path d="M1.5 10 V1.5 H9.5 M1.5 9.5 H4" fill="none" stroke="#8c8c8c" stroke-width="1"/><rect x="3.5" y="3.5" width="10" height="10" fill="#e6e6e6" stroke="#8c8c8c" stroke-width="1"/><rect x="3" y="3" width="11" height="2" fill="#9a9a9a"/><path d="M5 6 L8 8.5 L5 11 Z" fill="#9a9a9a"/><rect x="8.5" y="6" width="2" height="1" fill="#a8a8a8"/><rect x="8.5" y="8" width="2" height="1" fill="#a8a8a8"/><rect x="8.5" y="10" width="2" height="1" fill="#a8a8a8"/><rect x="11.5" y="5.5" width="1" height="7" fill="#8c8c8c"/></svg>
<div class="df " style="left:893px;top:698px;width:26px;height:18px;line-height:17px;text-align:right;padding-right:2px;padding-left:0;"></div>
<div class="" style="left:947px;top:700px;width:10px;height:10px;background:#d0d0d0;border-top:1px solid #33465e;border-left:1px solid #33465e"></div>
<div class="bt  dis" style="left:982px;top:700px;width:88px;height:15px;line-height:15px;line-height:16px;letter-spacing:0.25px;">Bedarfsprüfung</div>
<div class="" style="left:1076px;top:530px;width:15px;height:186px;background:#cfcfcf;border:1px solid #a2a6ac;border-radius:7px"></div>
<div class="" style="left:1076px;top:530px;width:15px;height:15px;border:1px solid #7f9cba;border-radius:7px 7px 0 0;"></div>
<div class="" style="left:1076px;top:701px;width:15px;height:15px;border:1px solid #7f9cba;border-radius:0 0 7px 7px;"></div>
<svg style="left:1080px;top:536px" width="7" height="4" viewBox="0 0 8 4" preserveAspectRatio="none"><path d="M0 4 H8 L4 0 Z" fill="#4f6c92"/></svg>
<svg style="left:1080px;top:706px" width="7" height="4" viewBox="0 0 8 4" preserveAspectRatio="none"><path d="M0 0 H8 L4 4 Z" fill="#4f6c92"/></svg>
<div class="" style="left:1086px;top:598px;width:2px;height:2px;background:#fff"></div>
<div class="" style="left:1086px;top:606px;width:2px;height:2px;background:#fff"></div>
<div class="" style="left:1086px;top:614px;width:2px;height:2px;background:#fff"></div>
<div class="" style="left:1086px;top:622px;width:2px;height:2px;background:#fff"></div>
<div class="" style="left:1086px;top:630px;width:2px;height:2px;background:#fff"></div>
<div class="" style="left:1086px;top:638px;width:2px;height:2px;background:#fff"></div>
<div class="" style="left:1080px;top:602px;width:2px;height:2px;background:#fff"></div>
<div class="" style="left:1080px;top:610px;width:2px;height:2px;background:#fff"></div>
<div class="" style="left:1080px;top:618px;width:2px;height:2px;background:#fff"></div>
<div class="" style="left:1080px;top:626px;width:2px;height:2px;background:#fff"></div>
<div class="" style="left:1080px;top:634px;width:2px;height:2px;background:#fff"></div>
<div class="" style="left:168px;top:723px;width:700px;height:37px;border:1px solid #000;border-radius:14px;"></div>
<div class="t" style="left:182px;top:733px;">Erfassung</div>
<div class="df dis" style="left:241px;top:733px;width:118px;height:17px;line-height:16px;line-height:15px;padding-left:0;border-top-width:1px;border-top-color:#7f9cba;">04.06.2021 13:43</div>
<div class="df dis" style="left:360px;top:733px;width:132px;height:17px;line-height:16px;line-height:15px;padding-left:0;border-top-width:1px;border-top-color:#7f9cba;">REFLEX</div>
<div class="t" style="left:537px;top:733px;">Änderung</div>
<div class="df dis" style="left:592px;top:733px;width:119px;height:17px;line-height:16px;"></div>
<div class="df dis" style="left:712px;top:733px;width:132px;height:17px;line-height:16px;"></div>
</body></html>
